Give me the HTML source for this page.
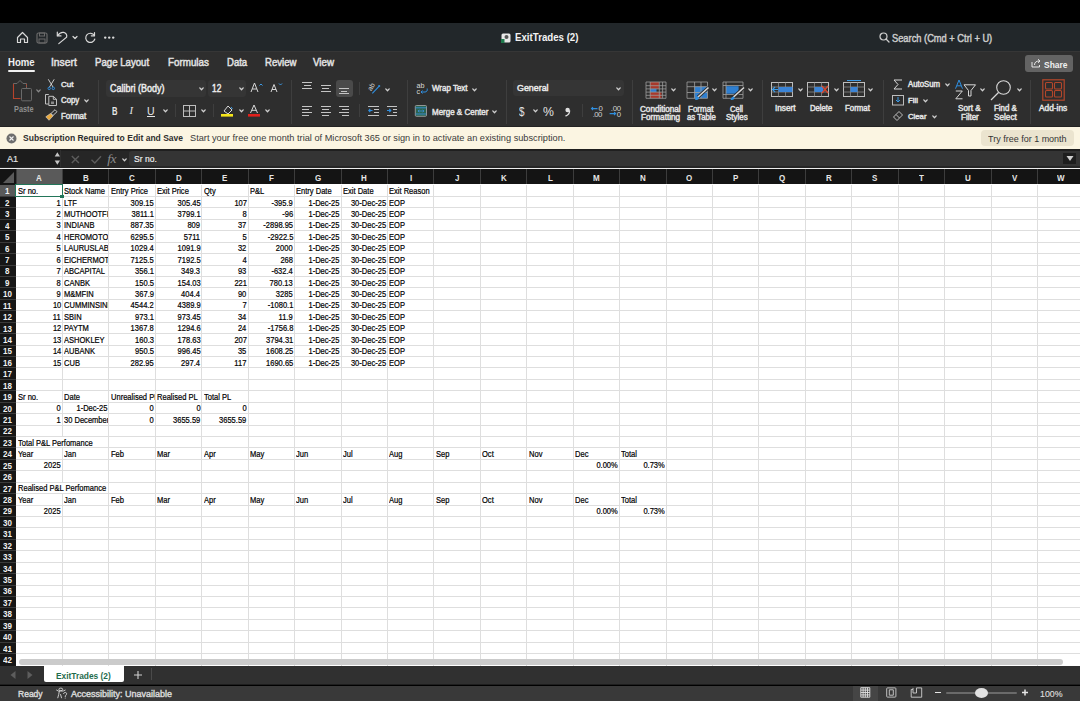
<!DOCTYPE html><html><head><meta charset="utf-8"><style>
html,body{margin:0;padding:0}
body{width:1080px;height:701px;overflow:hidden;position:relative;background:#000;font-family:"Liberation Sans",sans-serif}
.t{position:absolute;white-space:nowrap;line-height:20px;transform-origin:0 0}
.r{position:absolute}
.c{position:absolute;overflow:hidden;height:20px;white-space:nowrap}
.c span{position:absolute;line-height:20px;transform-origin:0 0;-webkit-text-stroke:0.2px #000}
.c span.rt{right:0;transform-origin:100% 0}
</style></head><body>
<div class="r" style="left:0.00px;top:0.00px;width:1080.00px;height:23.00px;background:#000;"></div>
<div class="r" style="left:0.00px;top:23.00px;width:1080.00px;height:28.00px;background:#22272a;"></div>
<div class="r" style="left:0.00px;top:51.00px;width:1080.00px;height:75.00px;background:#2e2e2e;"></div>
<div class="r" style="left:0.00px;top:51.00px;width:1080.00px;height:1.00px;background:#363636;"></div>
<div class="r" style="left:0.00px;top:126.00px;width:1080.00px;height:1.00px;background:#232323;"></div>
<div class="r" style="left:0.00px;top:127.00px;width:1080.00px;height:22.00px;background:#fbf5e2;"></div>
<div class="r" style="left:0.00px;top:149.00px;width:1080.00px;height:19.00px;background:#262626;"></div>
<div class="r" style="left:0.00px;top:149.00px;width:1080.00px;height:1.50px;background:#1f1f1f;"></div>
<div class="r" style="left:0.00px;top:167.60px;width:1080.00px;height:1.60px;background:#ececec;"></div>
<div class="r" style="left:0.00px;top:169.20px;width:1080.00px;height:14.80px;background:#141414;"></div>
<div class="r" style="left:0.00px;top:666.00px;width:1080.00px;height:18.30px;background:#303030;"></div>
<div class="r" style="left:0.00px;top:684.30px;width:1080.00px;height:1.20px;background:#1e1e1e;"></div>
<div class="r" style="left:0.00px;top:685.50px;width:1080.00px;height:15.50px;background:#393939;"></div>
<svg class="r" style="left:16px;top:31px" width="13" height="13" viewBox="0 0 13 13" fill="none"><path d="M1.5 6.5 L6.5 1.5 L11.5 6.5 V11.5 H8.5 V8 H4.5 V11.5 H1.5 Z" stroke="#d9d9d9" stroke-width="1.2" stroke-linecap="round" stroke-linejoin="round"/></svg>
<svg class="r" style="left:36px;top:32px" width="12" height="12" viewBox="0 0 12 12" fill="none"><rect x="1" y="1" width="10" height="10" rx="1.5" stroke="#6a6a6a" stroke-width="1.2"/><rect x="3.5" y="1" width="5" height="3" stroke="#6a6a6a" stroke-width="1"/><rect x="3" y="7" width="6" height="4" stroke="#6a6a6a" stroke-width="1"/></svg>
<svg class="r" style="left:55px;top:30px" width="14" height="16" viewBox="55 30 14 16" fill="none"><path d="M57.6 35.6 C59.5 32.8 61.5 32.1 63.6 32.4 C66 32.8 67.3 35 66.6 37.2 L58.8 43.6" stroke="#d9d9d9" stroke-width="1.2" stroke-linecap="round"/><path d="M57.3 32.2 V35.9 H61" stroke="#d9d9d9" stroke-width="1.2" stroke-linecap="round" stroke-linejoin="round"/></svg>
<svg class="r" style="left:72px;top:35px" width="6" height="5" viewBox="0 0 6 5" fill="none"><path d="M1 1.5 L3 3.5 L5 1.5" stroke="#d9d9d9" stroke-width="1.2" stroke-linecap="round" stroke-linejoin="round"/></svg>
<svg class="r" style="left:84px;top:31px" width="12" height="13" viewBox="0 0 12 13" fill="none"><path d="M10.3 4.5 A4.6 4.6 0 1 0 10.8 8" stroke="#d9d9d9" stroke-width="1.2" stroke-linecap="round" stroke-linejoin="round"/><path d="M10.5 1.5 V4.8 H7.3" stroke="#d9d9d9" stroke-width="1.2" stroke-linecap="round" stroke-linejoin="round"/></svg>
<svg class="r" style="left:103px;top:35px" width="13" height="5" viewBox="103 35 13 5" fill="none"><circle cx="105.2" cy="37.6" r="1.2" fill="#dcdcdc"/><circle cx="109.2" cy="37.6" r="1.2" fill="#dcdcdc"/><circle cx="113.2" cy="37.6" r="1.2" fill="#dcdcdc"/></svg>
<svg class="r" style="left:501px;top:33px" width="10" height="10" viewBox="0 0 10 10" fill="none"><rect x="0.5" y="0.5" width="9" height="9" rx="1.5" fill="#e8e8e8"/><circle cx="5.5" cy="4" r="2" fill="#555"/><rect x="0" y="6" width="3.5" height="4" fill="#1f7a4d"/></svg>
<div class="t" style="left:514.70px;top:27.97px;font-size:10.17px;color:#f2f2f2;font-weight:bold;transform:scaleX(0.9531);">ExitTrades (2)</div>
<svg class="r" style="left:879px;top:32px" width="11" height="11" viewBox="0 0 11 11" fill="none"><circle cx="4.5" cy="4.5" r="3.5" stroke="#cfcfcf" stroke-width="1.2"/><path d="M7 7 L10 10" stroke="#cfcfcf" stroke-width="1.3" stroke-linecap="round"/></svg>
<div class="t" style="left:891.60px;top:29.17px;font-size:10.17px;color:#cbcbcb;transform:scaleX(0.9153);-webkit-text-stroke:0.45px #cbcbcb;">Search (Cmd + Ctrl + U)</div>
<div class="t" style="left:7.90px;top:52.97px;font-size:10.17px;color:#f0f0f0;font-weight:bold;transform:scaleX(0.9445);">Home</div>
<div class="t" style="left:51.30px;top:52.97px;font-size:10.17px;color:#e2e2e2;transform:scaleX(1.0139);-webkit-text-stroke:0.45px #e2e2e2;">Insert</div>
<div class="t" style="left:95.40px;top:52.97px;font-size:10.17px;color:#e2e2e2;transform:scaleX(0.9486);-webkit-text-stroke:0.45px #e2e2e2;">Page Layout</div>
<div class="t" style="left:167.80px;top:52.97px;font-size:10.17px;color:#e2e2e2;transform:scaleX(0.9669);-webkit-text-stroke:0.45px #e2e2e2;">Formulas</div>
<div class="t" style="left:227.30px;top:52.97px;font-size:10.17px;color:#e2e2e2;transform:scaleX(0.9399);-webkit-text-stroke:0.45px #e2e2e2;">Data</div>
<div class="t" style="left:264.50px;top:52.97px;font-size:10.17px;color:#e2e2e2;transform:scaleX(0.9442);-webkit-text-stroke:0.45px #e2e2e2;">Review</div>
<div class="t" style="left:313.30px;top:52.97px;font-size:10.17px;color:#e2e2e2;transform:scaleX(0.9648);-webkit-text-stroke:0.45px #e2e2e2;">View</div>
<div class="r" style="left:8.00px;top:70.00px;width:27.00px;height:2.00px;background:#f0f0f0;border-radius:1px"></div>
<div class="r" style="left:1025.40px;top:55.00px;width:47.40px;height:17.00px;background:#636363;border-radius:3px"></div>
<svg class="r" style="left:1031px;top:58px" width="10" height="10" viewBox="0 0 10 10" fill="none"><path d="M1 4 V9 H8.5 V7" stroke="#e6e6e6" stroke-width="1"/><path d="M3.5 7 C3.5 4 5.5 3 8.5 3 M7 1.2 L9 3 L7 4.8" stroke="#e6e6e6" stroke-width="1" fill="none"/></svg>
<div class="t" style="left:1043.50px;top:54.68px;font-size:9.88px;color:#f0f0f0;font-weight:bold;transform:scaleX(0.8555);">Share</div>
<svg class="r" style="left:10px;top:78px" width="24" height="25" viewBox="10 78 24 25" fill="none"><path d="M13.5 84 V98.5 H20.5" stroke="#b5432c" stroke-width="1.1"/><path d="M13.5 84 V83.5 H17 L20 80.5 L23 83.5 H26.5 V88" stroke="#6a6a6a" stroke-width="1"/><path d="M26.5 84 V87" stroke="#b5432c" stroke-width="1" stroke-dasharray="1 1"/><rect x="21.5" y="88.5" width="10" height="12.3" rx="1" stroke="#6a6a6a" stroke-width="1"/></svg>
<svg class="r" style="left:35.50px;top:89.20px" width="5" height="4" viewBox="0 0 5 4" fill="none"><path d="M0.8 0.9 L2.5 2.7 L4.2 0.9" stroke="#8a8a8a" stroke-width="1.3" stroke-linecap="round" stroke-linejoin="round"/></svg>
<div class="t" style="left:14.40px;top:99.48px;font-size:8.72px;color:#8e8e8e;font-weight:bold;transform:scaleX(0.8422);">Paste</div>
<svg class="r" style="left:46px;top:78px" width="11" height="13" viewBox="46 78 11 13" fill="none"><path d="M48.3 79.3 L53 87 M54.2 79.3 L49.5 87" stroke="#d8d8d8" stroke-width="0.9"/><circle cx="49.2" cy="88.4" r="1.2" stroke="#2f8fe0" stroke-width="1"/><circle cx="53.3" cy="88.4" r="1.2" stroke="#2f8fe0" stroke-width="1"/></svg>
<div class="t" style="left:60.60px;top:75.18px;font-size:7.85px;color:#e4e4e4;transform:scaleX(1.0234);-webkit-text-stroke:0.45px #e4e4e4;">Cut</div>
<svg class="r" style="left:44px;top:93px" width="14" height="14" viewBox="44 93 14 14" fill="none"><path d="M48.8 94.5 H45.5 V104 H48.5" stroke="#d0d0d0" stroke-width="0.9"/><path d="M48.8 96.3 H53.3 L56.5 99.3 V105.5 H48.8 Z M53.3 96.3 V99.3 H56.5" stroke="#d0d0d0" stroke-width="0.9"/><rect x="51" y="101.5" width="3" height="2.5" fill="#8a8a8a"/></svg>
<div class="t" style="left:60.60px;top:90.88px;font-size:8.14px;color:#e4e4e4;transform:scaleX(0.9631);-webkit-text-stroke:0.45px #e4e4e4;">Copy</div>
<svg class="r" style="left:83.50px;top:99.20px" width="5" height="4" viewBox="0 0 5 4" fill="none"><path d="M0.8 0.9 L2.5 2.7 L4.2 0.9" stroke="#d0d0d0" stroke-width="1.3" stroke-linecap="round" stroke-linejoin="round"/></svg>
<svg class="r" style="left:44px;top:108px" width="14" height="14" viewBox="44 108 14 14" fill="none"><path d="M51 113.5 L55 109.7 L57 111.7 L53 115.5 Z" stroke="#d8d8d8" stroke-width="0.9"/><path d="M50.5 113.5 L53 116 L49 120.3 L45.8 116.8 Z" fill="#e9a93d" stroke="#d8d8d8" stroke-width="0.6"/></svg>
<div class="t" style="left:60.60px;top:106.78px;font-size:8.14px;color:#e4e4e4;transform:scaleX(0.9814);-webkit-text-stroke:0.45px #e4e4e4;">Format</div>
<div class="r" style="left:98.00px;top:80.00px;width:1.00px;height:44.00px;background:#3e3e3e;"></div>
<div class="r" style="left:106.00px;top:79.60px;width:100.00px;height:17.30px;background:#353535;border-radius:3px"></div>
<div class="t" style="left:110.20px;top:79.12px;font-size:10.03px;color:#ececec;transform:scaleX(0.8988);-webkit-text-stroke:0.45px #ececec;">Calibri (Body)</div>
<svg class="r" style="left:198.50px;top:87.20px" width="5" height="4" viewBox="0 0 5 4" fill="none"><path d="M0.8 0.9 L2.5 2.7 L4.2 0.9" stroke="#d0d0d0" stroke-width="1.3" stroke-linecap="round" stroke-linejoin="round"/></svg>
<div class="r" style="left:208.30px;top:79.60px;width:38.00px;height:17.30px;background:#353535;border-radius:3px"></div>
<div class="t" style="left:212.00px;top:79.12px;font-size:10.03px;color:#ececec;transform:scaleX(0.8336);-webkit-text-stroke:0.45px #ececec;">12</div>
<svg class="r" style="left:238.50px;top:87.20px" width="5" height="4" viewBox="0 0 5 4" fill="none"><path d="M0.8 0.9 L2.5 2.7 L4.2 0.9" stroke="#d0d0d0" stroke-width="1.3" stroke-linecap="round" stroke-linejoin="round"/></svg>
<svg class="r" style="left:250px;top:82px" width="14" height="11" viewBox="0 0 14 11" fill="none"><path d="M1 10 L4.5 1 L8 10 M2.3 7 H6.7" stroke="#d8d8d8" stroke-width="1"/><path d="M9.5 3.5 L11 2 L12.5 3.5" stroke="#3b9ae6" stroke-width="1"/></svg>
<svg class="r" style="left:270px;top:82px" width="13" height="11" viewBox="0 0 13 11" fill="none"><path d="M1 10 L4 2.5 L7 10 M2 7.5 H6" stroke="#d8d8d8" stroke-width="1"/><path d="M9 1.5 L10.5 3 L12 1.5" stroke="#3b9ae6" stroke-width="1"/></svg>
<div class="t" style="left:111.50px;top:101.37px;font-size:10.76px;color:#e4e4e4;font-weight:bold;transform:scaleX(0.7081);">B</div>
<div class="t" style="left:129.5px;top:100.5px;font-size:10.5px;color:#e4e4e4;font-style:italic;font-family:'Liberation Serif'">I</div>
<div class="t" style="left:147.00px;top:101.37px;font-size:10.76px;color:#e4e4e4;transform:scaleX(0.9784);">U</div>
<div class="r" style="left:147.00px;top:115.50px;width:7.60px;height:1.00px;background:#e4e4e4;"></div>
<svg class="r" style="left:162.50px;top:109.20px" width="5" height="4" viewBox="0 0 5 4" fill="none"><path d="M0.8 0.9 L2.5 2.7 L4.2 0.9" stroke="#d0d0d0" stroke-width="1.3" stroke-linecap="round" stroke-linejoin="round"/></svg>
<div class="r" style="left:175.00px;top:104.00px;width:1.00px;height:13.00px;background:#3e3e3e;"></div>
<svg class="r" style="left:183px;top:105px" width="13" height="12" viewBox="0 0 13 12" fill="none"><rect x="0.5" y="0.5" width="12" height="11" stroke="#bdbdbd" stroke-width="1"/><path d="M6.5 0.5 V11.5 M0.5 6 H12.5" stroke="#bdbdbd" stroke-width="1"/></svg>
<svg class="r" style="left:200.50px;top:109.20px" width="5" height="4" viewBox="0 0 5 4" fill="none"><path d="M0.8 0.9 L2.5 2.7 L4.2 0.9" stroke="#d0d0d0" stroke-width="1.3" stroke-linecap="round" stroke-linejoin="round"/></svg>
<div class="r" style="left:213.00px;top:104.00px;width:1.00px;height:13.00px;background:#3e3e3e;"></div>
<svg class="r" style="left:221px;top:104px" width="13" height="13" viewBox="0 0 13 13" fill="none"><path d="M3 7 L7 2 L11 6 L7 10 Z" stroke="#d8d8d8" stroke-width="1"/><path d="M10 3 L11.5 5" stroke="#3b9ae6" stroke-width="1"/><rect x="0" y="10" width="12" height="2.6" fill="#f5e51a"/></svg>
<svg class="r" style="left:238.50px;top:109.20px" width="5" height="4" viewBox="0 0 5 4" fill="none"><path d="M0.8 0.9 L2.5 2.7 L4.2 0.9" stroke="#d0d0d0" stroke-width="1.3" stroke-linecap="round" stroke-linejoin="round"/></svg>
<svg class="r" style="left:248px;top:104px" width="13" height="13" viewBox="0 0 13 13" fill="none"><path d="M2.5 9 L6 1 L9.5 9 M3.8 6.3 H8.2" stroke="#d8d8d8" stroke-width="1"/><rect x="0" y="10" width="12" height="2.6" fill="#e0201b"/></svg>
<svg class="r" style="left:265.00px;top:109.20px" width="5" height="4" viewBox="0 0 5 4" fill="none"><path d="M0.8 0.9 L2.5 2.7 L4.2 0.9" stroke="#d0d0d0" stroke-width="1.3" stroke-linecap="round" stroke-linejoin="round"/></svg>
<div class="r" style="left:290.50px;top:80.00px;width:1.00px;height:44.00px;background:#3e3e3e;"></div>
<div class="r" style="left:302.00px;top:82.00px;width:10.00px;height:1.00px;background:#c4c4c4;"></div>
<div class="r" style="left:304.00px;top:85.00px;width:7.00px;height:1.00px;background:#c4c4c4;"></div>
<div class="r" style="left:302.00px;top:88.00px;width:10.00px;height:1.00px;background:#c4c4c4;"></div>
<div class="r" style="left:321.00px;top:85.00px;width:10.00px;height:1.00px;background:#c4c4c4;"></div>
<div class="r" style="left:322.00px;top:88.00px;width:7.00px;height:1.00px;background:#c4c4c4;"></div>
<div class="r" style="left:321.00px;top:91.00px;width:10.00px;height:1.00px;background:#c4c4c4;"></div>
<div class="r" style="left:335.80px;top:79.80px;width:16.90px;height:17.10px;background:#4a4a4a;border-radius:3px"></div>
<div class="r" style="left:339.00px;top:88.00px;width:10.00px;height:1.00px;background:#c4c4c4;"></div>
<div class="r" style="left:341.00px;top:91.00px;width:6.00px;height:1.00px;background:#c4c4c4;"></div>
<div class="r" style="left:339.00px;top:93.00px;width:10.00px;height:1.00px;background:#c4c4c4;"></div>
<div class="r" style="left:358.50px;top:82.00px;width:1.00px;height:13.00px;background:#3e3e3e;"></div>
<svg class="r" style="left:364px;top:80px" width="18" height="15" viewBox="364 80 18 15" fill="none"><text x="371.3" y="91.3" font-size="7" fill="#d8d8d8" font-family="Liberation Sans" transform="rotate(-60 371.3 91.3)">ab</text><path d="M372.3 93.3 L379 86.3" stroke="#2f8fe0" stroke-width="1.1"/><circle cx="379.2" cy="86" r="1.1" fill="#2f8fe0"/></svg>
<svg class="r" style="left:384.50px;top:88.20px" width="5" height="4" viewBox="0 0 5 4" fill="none"><path d="M0.8 0.9 L2.5 2.7 L4.2 0.9" stroke="#d0d0d0" stroke-width="1.3" stroke-linecap="round" stroke-linejoin="round"/></svg>
<div class="r" style="left:302.00px;top:106.00px;width:10.00px;height:1.00px;background:#c4c4c4;"></div>
<div class="r" style="left:302.00px;top:109.00px;width:7.00px;height:1.00px;background:#c4c4c4;"></div>
<div class="r" style="left:302.00px;top:112.00px;width:10.00px;height:1.00px;background:#c4c4c4;"></div>
<div class="r" style="left:302.00px;top:115.00px;width:7.00px;height:1.00px;background:#c4c4c4;"></div>
<div class="r" style="left:321.00px;top:106.00px;width:10.00px;height:1.00px;background:#c4c4c4;"></div>
<div class="r" style="left:322.00px;top:109.00px;width:7.00px;height:1.00px;background:#c4c4c4;"></div>
<div class="r" style="left:321.00px;top:112.00px;width:10.00px;height:1.00px;background:#c4c4c4;"></div>
<div class="r" style="left:322.00px;top:115.00px;width:7.00px;height:1.00px;background:#c4c4c4;"></div>
<div class="r" style="left:339.00px;top:106.00px;width:10.00px;height:1.00px;background:#c4c4c4;"></div>
<div class="r" style="left:342.00px;top:109.00px;width:7.00px;height:1.00px;background:#c4c4c4;"></div>
<div class="r" style="left:339.00px;top:112.00px;width:10.00px;height:1.00px;background:#c4c4c4;"></div>
<div class="r" style="left:342.00px;top:115.00px;width:7.00px;height:1.00px;background:#c4c4c4;"></div>
<div class="r" style="left:358.50px;top:104.00px;width:1.00px;height:13.00px;background:#3e3e3e;"></div>
<div class="r" style="left:368.00px;top:106.00px;width:11.00px;height:1.00px;background:#c4c4c4;"></div>
<div class="r" style="left:374.00px;top:109.00px;width:5.00px;height:1.00px;background:#c4c4c4;"></div>
<div class="r" style="left:374.00px;top:112.00px;width:5.00px;height:1.00px;background:#c4c4c4;"></div>
<div class="r" style="left:368.00px;top:115.00px;width:11.00px;height:1.00px;background:#c4c4c4;"></div>
<svg class="r" style="left:367px;top:107px" width="7" height="7" viewBox="367 107 7 7" fill="none"><path d="M372.5 110.5 H368.8 M370.3 109 L368.8 110.5 L370.3 112" stroke="#2f8fe0" stroke-width="1.1"/></svg>
<div class="r" style="left:387.00px;top:106.00px;width:10.00px;height:1.00px;background:#c4c4c4;"></div>
<div class="r" style="left:393.00px;top:109.00px;width:4.00px;height:1.00px;background:#c4c4c4;"></div>
<div class="r" style="left:393.00px;top:112.00px;width:4.00px;height:1.00px;background:#c4c4c4;"></div>
<div class="r" style="left:387.00px;top:115.00px;width:10.00px;height:1.00px;background:#c4c4c4;"></div>
<svg class="r" style="left:386px;top:107px" width="7" height="7" viewBox="386 107 7 7" fill="none"><path d="M387 110.5 H390.8 M389.3 109 L390.8 110.5 L389.3 112" stroke="#2f8fe0" stroke-width="1.1"/></svg>
<div class="r" style="left:406.50px;top:80.00px;width:1.00px;height:44.00px;background:#3e3e3e;"></div>
<svg class="r" style="left:415px;top:82px" width="14" height="13" viewBox="415 82 14 13" fill="none"><text x="416.5" y="88.2" font-size="7.2" fill="#d8d8d8" font-family="Liberation Sans">ab</text><text x="416.5" y="93.6" font-size="7.2" fill="#d8d8d8" font-family="Liberation Sans">c</text><path d="M421 92 H425 C427 92 427.5 90.5 427.2 88.5 M422.5 90.5 L421 92 L422.5 93.5" stroke="#2f8fe0" stroke-width="1"/></svg>
<div class="t" style="left:431.60px;top:79.43px;font-size:8.28px;color:#e4e4e4;transform:scaleX(0.9624);-webkit-text-stroke:0.45px #e4e4e4;">Wrap Text</div>
<svg class="r" style="left:472.00px;top:87.70px" width="5" height="4" viewBox="0 0 5 4" fill="none"><path d="M0.8 0.9 L2.5 2.7 L4.2 0.9" stroke="#d0d0d0" stroke-width="1.3" stroke-linecap="round" stroke-linejoin="round"/></svg>
<svg class="r" style="left:414px;top:104px" width="14" height="14" viewBox="414 104 14 14" fill="none"><rect x="415.3" y="105.5" width="11.2" height="10.8" rx="1" fill="#2a6452" stroke="#a0a0a0" stroke-width="0.9"/><path d="M415.5 107.8 H426.3 M415.5 114 H426.3" stroke="#3a8fd8" stroke-width="0.9"/><path d="M418 111 H424 M419.3 109.8 L418 111 L419.3 112.2 M422.7 109.8 L424 111 L422.7 112.2" stroke="#3a8fd8" stroke-width="0.8"/></svg>
<div class="t" style="left:431.60px;top:102.33px;font-size:8.58px;color:#e4e4e4;transform:scaleX(0.9317);-webkit-text-stroke:0.45px #e4e4e4;">Merge &amp; Center</div>
<svg class="r" style="left:492.00px;top:110.20px" width="5" height="4" viewBox="0 0 5 4" fill="none"><path d="M0.8 0.9 L2.5 2.7 L4.2 0.9" stroke="#d0d0d0" stroke-width="1.3" stroke-linecap="round" stroke-linejoin="round"/></svg>
<div class="r" style="left:506.00px;top:80.00px;width:1.00px;height:44.00px;background:#3e3e3e;"></div>
<div class="r" style="left:513.20px;top:79.60px;width:110.80px;height:16.90px;background:#353535;border-radius:3px"></div>
<div class="t" style="left:517.30px;top:78.33px;font-size:9.45px;color:#ececec;transform:scaleX(0.9401);-webkit-text-stroke:0.45px #ececec;">General</div>
<svg class="r" style="left:615.50px;top:86.70px" width="5" height="4" viewBox="0 0 5 4" fill="none"><path d="M0.8 0.9 L2.5 2.7 L4.2 0.9" stroke="#d0d0d0" stroke-width="1.3" stroke-linecap="round" stroke-linejoin="round"/></svg>
<div class="t" style="left:518.70px;top:102.17px;font-size:13.08px;color:#e4e4e4;transform:scaleX(0.7560);">$</div>
<svg class="r" style="left:533.00px;top:109.20px" width="5" height="4" viewBox="0 0 5 4" fill="none"><path d="M0.8 0.9 L2.5 2.7 L4.2 0.9" stroke="#d0d0d0" stroke-width="1.3" stroke-linecap="round" stroke-linejoin="round"/></svg>
<div class="t" style="left:543.30px;top:102.02px;font-size:12.94px;color:#e4e4e4;transform:scaleX(0.9477);">%</div>
<svg class="r" style="left:563px;top:106px" width="9" height="11" viewBox="563 106 9 11" fill="none"><circle cx="567.6" cy="110" r="2.2" fill="#e0e0e0"/><path d="M569.5 110.3 C569.8 113 568.3 115 565.5 116" stroke="#e0e0e0" stroke-width="1.4" fill="none"/></svg>
<div class="r" style="left:582.30px;top:104.00px;width:1.00px;height:13.00px;background:#3e3e3e;"></div>
<svg class="r" style="left:589px;top:103px" width="35" height="15" viewBox="589 103 35 15" fill="none"><path d="M597.5 108.6 H591.5 M593 107.1 L591.5 108.6 L593 110.1" stroke="#2f8fe0" stroke-width="1.1"/><text x="598.6" y="111.1" font-size="7.8" fill="#d0d0d0" font-family="Liberation Sans">0</text><text x="592.8" y="116.5" font-size="7.8" fill="#d0d0d0" font-family="Liberation Sans" textLength="9.5">.00</text><text x="610.8" y="111.1" font-size="7.8" fill="#d0d0d0" font-family="Liberation Sans" textLength="10.3">.00</text><path d="M609.6 113.6 H615.6 M614.1 112.1 L615.6 113.6 L614.1 115.1" stroke="#2f8fe0" stroke-width="1.1"/><text x="616.8" y="116.5" font-size="7.8" fill="#d0d0d0" font-family="Liberation Sans">0</text></svg>
<div class="r" style="left:632.00px;top:80.00px;width:1.00px;height:44.00px;background:#3e3e3e;"></div>
<svg class="r" style="left:645px;top:81px" width="22" height="18" viewBox="645 81 22 18" fill="none"><rect x="650" y="82" width="9" height="6.8" fill="#a8392b"/><rect x="650" y="88.8" width="6.5" height="3.4" fill="#2f7fd0"/><rect x="650" y="92.2" width="11.5" height="6" fill="#a8392b"/><path d="M646 82 H666 V98.3 H646 Z M646 85.7 H666 M646 88.9 H666 M646 92.1 H666 M646 95.3 H666 M650.2 82 V98.3 M659.3 82 V98.3 M662.6 82 V98.3" stroke="#9c9c9c" stroke-width="0.8"/></svg>
<svg class="r" style="left:671.00px;top:88.20px" width="5" height="4" viewBox="0 0 5 4" fill="none"><path d="M0.8 0.9 L2.5 2.7 L4.2 0.9" stroke="#d0d0d0" stroke-width="1.3" stroke-linecap="round" stroke-linejoin="round"/></svg>
<div class="t" style="left:640.30px;top:98.88px;font-size:8.43px;color:#e4e4e4;transform:scaleX(0.9649);-webkit-text-stroke:0.45px #e4e4e4;">Conditional</div>
<div class="t" style="left:640.80px;top:107.08px;font-size:8.43px;color:#e4e4e4;transform:scaleX(0.9729);-webkit-text-stroke:0.45px #e4e4e4;">Formatting</div>
<svg class="r" style="left:686px;top:80px" width="25" height="21" viewBox="686 80 25 21" fill="none"><rect x="694.6" y="86.7" width="12.9" height="11.6" fill="#2f7fd0"/><path d="M687 82 H707.5 V98.3 H687 Z M687 86.7 H707.5 M687 92.5 H707.5 M694.6 82 V98.3 M701 82 V98.3" stroke="#a0a0a0" stroke-width="0.8"/><path d="M708.5 87.5 L698 97" stroke="#2e2e2e" stroke-width="3.2"/><path d="M708.5 87.5 L698 97" stroke="#d8d8d8" stroke-width="1.6"/><path d="M697.5 96.5 C695.5 97.5 694.5 99.5 695.5 100 C697.5 100.5 699.5 99 699 97.5 Z" fill="#2f8fe0"/></svg>
<svg class="r" style="left:712.00px;top:88.20px" width="5" height="4" viewBox="0 0 5 4" fill="none"><path d="M0.8 0.9 L2.5 2.7 L4.2 0.9" stroke="#d0d0d0" stroke-width="1.3" stroke-linecap="round" stroke-linejoin="round"/></svg>
<div class="t" style="left:688.40px;top:98.88px;font-size:8.43px;color:#e4e4e4;transform:scaleX(0.9513);-webkit-text-stroke:0.45px #e4e4e4;">Format</div>
<div class="t" style="left:686.60px;top:107.08px;font-size:8.43px;color:#e4e4e4;transform:scaleX(0.9249);-webkit-text-stroke:0.45px #e4e4e4;">as Table</div>
<svg class="r" style="left:722px;top:80px" width="25" height="21" viewBox="722 80 25 21" fill="none"><rect x="726" y="86.2" width="12.6" height="7.5" fill="#2f7fd0"/><path d="M723 82 H743 V98.3 H723 Z M723 85.5 H743 M723 94.5 H743 M726 82 V98.3" stroke="#a0a0a0" stroke-width="0.8"/><path d="M744 87.5 L733.5 97" stroke="#2e2e2e" stroke-width="3.2"/><path d="M744 87.5 L733.5 97" stroke="#d8d8d8" stroke-width="1.6"/><path d="M733 96.5 C731 97.5 730 99.5 731 100 C733 100.5 735 99 734.5 97.5 Z" fill="#2f8fe0"/></svg>
<svg class="r" style="left:748.00px;top:88.20px" width="5" height="4" viewBox="0 0 5 4" fill="none"><path d="M0.8 0.9 L2.5 2.7 L4.2 0.9" stroke="#d0d0d0" stroke-width="1.3" stroke-linecap="round" stroke-linejoin="round"/></svg>
<div class="t" style="left:730.00px;top:98.88px;font-size:8.43px;color:#e4e4e4;transform:scaleX(0.8951);-webkit-text-stroke:0.45px #e4e4e4;">Cell</div>
<div class="t" style="left:725.80px;top:107.08px;font-size:8.43px;color:#e4e4e4;transform:scaleX(0.9452);-webkit-text-stroke:0.45px #e4e4e4;">Styles</div>
<div class="r" style="left:762.00px;top:80.00px;width:1.00px;height:44.00px;background:#3e3e3e;"></div>
<svg class="r" style="left:771.3px;top:79.5px" width="23" height="19" viewBox="0 0 23 19" fill="none"><rect x="0.5" y="2.5" width="21" height="14" stroke="#bdbdbd" stroke-width="1"/><path d="M0.5 7 H21.5 M0.5 12 H21.5 M7.5 2.5 V16.5 M14.5 2.5 V16.5" stroke="#8a8a8a" stroke-width="0.8"/><rect x="7.5" y="7" width="14" height="5" fill="#3b84d6"/><path d="M7 9.5 H1.5 M4 7 L1.5 9.5 L4 12" stroke="#3b9ae6" stroke-width="1.2"/></svg>
<svg class="r" style="left:798.00px;top:88.20px" width="5" height="4" viewBox="0 0 5 4" fill="none"><path d="M0.8 0.9 L2.5 2.7 L4.2 0.9" stroke="#d0d0d0" stroke-width="1.3" stroke-linecap="round" stroke-linejoin="round"/></svg>
<div class="t" style="left:775.40px;top:99.28px;font-size:8.14px;color:#e4e4e4;transform:scaleX(1.0119);-webkit-text-stroke:0.45px #e4e4e4;">Insert</div>
<svg class="r" style="left:807.4px;top:79.5px" width="23" height="19" viewBox="0 0 23 19" fill="none"><rect x="0.5" y="2.5" width="21" height="14" stroke="#bdbdbd" stroke-width="1"/><path d="M0.5 7 H21.5 M0.5 12 H21.5 M7.5 2.5 V16.5 M14.5 2.5 V16.5" stroke="#8a8a8a" stroke-width="0.8"/><rect x="7.5" y="7" width="9" height="5" fill="#3b84d6"/><path d="M15 6 L21 13 M21 6 L15 13" stroke="#d9472f" stroke-width="1.3"/></svg>
<svg class="r" style="left:833.50px;top:88.20px" width="5" height="4" viewBox="0 0 5 4" fill="none"><path d="M0.8 0.9 L2.5 2.7 L4.2 0.9" stroke="#d0d0d0" stroke-width="1.3" stroke-linecap="round" stroke-linejoin="round"/></svg>
<div class="t" style="left:810.40px;top:99.28px;font-size:8.14px;color:#e4e4e4;transform:scaleX(0.9435);-webkit-text-stroke:0.45px #e4e4e4;">Delete</div>
<svg class="r" style="left:843px;top:79.5px" width="23" height="19" viewBox="0 0 23 19" fill="none"><rect x="0.5" y="2.5" width="21" height="14" stroke="#bdbdbd" stroke-width="1"/><path d="M0.5 7 H21.5 M0.5 12 H21.5 M7.5 2.5 V16.5 M14.5 2.5 V16.5" stroke="#8a8a8a" stroke-width="0.8"/><rect x="7.5" y="7" width="7" height="5" fill="#3b84d6"/><path d="M4 0.5 H18" stroke="#3b9ae6" stroke-width="1"/></svg>
<svg class="r" style="left:868.00px;top:88.20px" width="5" height="4" viewBox="0 0 5 4" fill="none"><path d="M0.8 0.9 L2.5 2.7 L4.2 0.9" stroke="#d0d0d0" stroke-width="1.3" stroke-linecap="round" stroke-linejoin="round"/></svg>
<div class="t" style="left:845.30px;top:99.28px;font-size:8.14px;color:#e4e4e4;transform:scaleX(0.9659);-webkit-text-stroke:0.45px #e4e4e4;">Format</div>
<div class="r" style="left:883.00px;top:80.00px;width:1.00px;height:44.00px;background:#3e3e3e;"></div>
<svg class="r" style="left:893px;top:79px" width="10" height="11" viewBox="0 0 10 11" fill="none"><path d="M9 1 H1 L5 5.5 L1 10 H9" stroke="#d8d8d8" stroke-width="1"/></svg>
<div class="t" style="left:908.00px;top:74.98px;font-size:8.14px;color:#e4e4e4;transform:scaleX(0.9587);-webkit-text-stroke:0.45px #e4e4e4;">AutoSum</div>
<svg class="r" style="left:945.00px;top:83.20px" width="5" height="4" viewBox="0 0 5 4" fill="none"><path d="M0.8 0.9 L2.5 2.7 L4.2 0.9" stroke="#d0d0d0" stroke-width="1.3" stroke-linecap="round" stroke-linejoin="round"/></svg>
<svg class="r" style="left:891.5px;top:95px" width="12" height="11" viewBox="0 0 12 11" fill="none"><rect x="0.5" y="0.5" width="11" height="9.5" stroke="#bdbdbd" stroke-width="1"/><path d="M6 2 V7 M4 5 L6 7 L8 5" stroke="#3b9ae6" stroke-width="1"/></svg>
<div class="t" style="left:908.00px;top:91.13px;font-size:7.70px;color:#e4e4e4;transform:scaleX(1.0162);-webkit-text-stroke:0.45px #e4e4e4;">Fill</div>
<svg class="r" style="left:922.50px;top:99.20px" width="5" height="4" viewBox="0 0 5 4" fill="none"><path d="M0.8 0.9 L2.5 2.7 L4.2 0.9" stroke="#d0d0d0" stroke-width="1.3" stroke-linecap="round" stroke-linejoin="round"/></svg>
<svg class="r" style="left:891.5px;top:110px" width="12" height="11" viewBox="0 0 12 11" fill="none"><path d="M1.5 7 L7 1.5 L10.5 5 L5 10.5 Z M4 4.5 L7.5 8" stroke="#bdbdbd" stroke-width="1"/></svg>
<div class="t" style="left:908.00px;top:106.53px;font-size:7.70px;color:#e4e4e4;transform:scaleX(1.0049);-webkit-text-stroke:0.45px #e4e4e4;">Clear</div>
<svg class="r" style="left:931.50px;top:114.70px" width="5" height="4" viewBox="0 0 5 4" fill="none"><path d="M0.8 0.9 L2.5 2.7 L4.2 0.9" stroke="#d0d0d0" stroke-width="1.3" stroke-linecap="round" stroke-linejoin="round"/></svg>
<svg class="r" style="left:954px;top:78px" width="24" height="23" viewBox="954 78 24 23" fill="none"><path d="M955.5 88.7 L959 80 L962.5 88.7 M956.8 85.8 H961.2" stroke="#2f8fe0" stroke-width="1"/><path d="M955.8 91 H962.3 L955.8 98.8 H962.5" stroke="#d8d8d8" stroke-width="1"/><path d="M964 84.8 H975.5 L971 90.5 V96 L968.5 96 V90.5 Z" stroke="#d8d8d8" stroke-width="1"/></svg>
<svg class="r" style="left:980.00px;top:88.20px" width="5" height="4" viewBox="0 0 5 4" fill="none"><path d="M0.8 0.9 L2.5 2.7 L4.2 0.9" stroke="#d0d0d0" stroke-width="1.3" stroke-linecap="round" stroke-linejoin="round"/></svg>
<div class="t" style="left:958.00px;top:99.28px;font-size:8.14px;color:#e4e4e4;transform:scaleX(1.0036);-webkit-text-stroke:0.45px #e4e4e4;">Sort &amp;</div>
<div class="t" style="left:960.90px;top:107.08px;font-size:8.43px;color:#e4e4e4;transform:scaleX(0.9501);-webkit-text-stroke:0.45px #e4e4e4;">Filter</div>
<svg class="r" style="left:990px;top:79px" width="22" height="22" viewBox="0 0 22 22" fill="none"><circle cx="13.5" cy="8.5" r="6.8" stroke="#d8d8d8" stroke-width="1.1"/><path d="M8.5 13.5 L1 21" stroke="#d8d8d8" stroke-width="1.2"/></svg>
<svg class="r" style="left:1016.50px;top:88.20px" width="5" height="4" viewBox="0 0 5 4" fill="none"><path d="M0.8 0.9 L2.5 2.7 L4.2 0.9" stroke="#d0d0d0" stroke-width="1.3" stroke-linecap="round" stroke-linejoin="round"/></svg>
<div class="t" style="left:993.50px;top:99.28px;font-size:8.14px;color:#e4e4e4;transform:scaleX(0.9692);-webkit-text-stroke:0.45px #e4e4e4;">Find &amp;</div>
<div class="t" style="left:993.50px;top:107.08px;font-size:8.43px;color:#e4e4e4;transform:scaleX(0.9731);-webkit-text-stroke:0.45px #e4e4e4;">Select</div>
<div class="r" style="left:1030.00px;top:80.00px;width:1.00px;height:44.00px;background:#3e3e3e;"></div>
<svg class="r" style="left:1041.5px;top:78.5px" width="23" height="22" viewBox="0 0 23 22" fill="none"><rect x="0.8" y="0.8" width="21.4" height="20.4" stroke="#b3472b" stroke-width="1.2"/><rect x="3.5" y="3.5" width="7" height="6.5" rx="1" stroke="#b3472b" stroke-width="1.1"/><rect x="12.5" y="3.5" width="7" height="6.5" rx="1" stroke="#b3472b" stroke-width="1.1"/><rect x="3.5" y="11.5" width="7" height="6.5" rx="1" stroke="#b3472b" stroke-width="1.1"/><rect x="12.5" y="11.5" width="7" height="6.5" rx="1" stroke="#b3472b" stroke-width="1.1"/></svg>
<div class="t" style="left:1039.00px;top:99.28px;font-size:8.14px;color:#e4e4e4;transform:scaleX(1.0254);-webkit-text-stroke:0.45px #e4e4e4;">Add-ins</div>
<svg class="r" style="left:6px;top:133px" width="11" height="11" viewBox="0 0 11 11" fill="none"><circle cx="5.5" cy="5.5" r="5" fill="#6e6e6e"/><path d="M3.5 3.5 L7.5 7.5 M7.5 3.5 L3.5 7.5" stroke="#f2f2f2" stroke-width="1.1"/></svg>
<div class="t" style="left:22.90px;top:128.33px;font-size:9.16px;color:#2f2f2f;font-weight:bold;transform:scaleX(0.9310);">Subscription Required to Edit and Save</div>
<div class="t" style="left:190.00px;top:128.33px;font-size:9.16px;color:#3a3a3a;transform:scaleX(1.0062);">Start your free one month trial of Microsoft 365 or sign in to activate an existing subscription.</div>
<div class="r" style="left:980.50px;top:129.70px;width:93.40px;height:16.70px;background:#ebe4cf;border-radius:4px"></div>
<div class="t" style="left:988.30px;top:129.23px;font-size:9.45px;color:#333;transform:scaleX(0.9527);">Try free for 1 month</div>
<div class="r" style="left:0.00px;top:149.50px;width:60.70px;height:17.50px;background:#1c1c1c;"></div>
<div class="r" style="left:60.20px;top:149.50px;width:1.00px;height:17.50px;background:#2f2f2f;"></div>
<div class="t" style="left:6.80px;top:148.73px;font-size:8.87px;color:#e6e6e6;transform:scaleX(1.0235);-webkit-text-stroke:0.15px #e6e6e6;">A1</div>
<svg class="r" style="left:53px;top:151px" width="9" height="15" viewBox="53 151 9 15" fill="none"><path d="M57.35 152.3 L60 156.4 H54.7 Z M57.35 164.7 L60 160.5 H54.7 Z" fill="#c4c4c4"/></svg>
<svg class="r" style="left:70px;top:154px" width="11" height="11" viewBox="70 154 11 11" fill="none"><path d="M71.8 156 L78.9 163 M78.9 156 L71.8 163" stroke="#5c5c5c" stroke-width="1.4"/></svg>
<svg class="r" style="left:90px;top:154px" width="13" height="11" viewBox="90 154 13 11" fill="none"><path d="M91.5 159.8 L94.8 163 L101 156.2" stroke="#5c5c5c" stroke-width="1.4"/></svg>
<div class="t" style="left:107.3px;top:149.2px;font-size:13.5px;color:#8c8c8c;font-style:italic;font-family:'Liberation Serif';letter-spacing:-0.6px">fx</div>
<svg class="r" style="left:122.30px;top:157.80px" width="5" height="4" viewBox="0 0 5 4" fill="none"><path d="M0.8 0.9 L2.5 2.7 L4.2 0.9" stroke="#d0d0d0" stroke-width="1.3" stroke-linecap="round" stroke-linejoin="round"/></svg>
<div class="r" style="left:128.80px;top:151.30px;width:951.20px;height:14.90px;background:#343434;border-radius:3px 0 0 3px"></div>
<div class="t" style="left:133.60px;top:149.08px;font-size:9.30px;color:#f2f2f2;transform:scaleX(0.9186);-webkit-text-stroke:0.15px #f2f2f2;">Sr no.</div>
<div class="r" style="left:1063.00px;top:153.00px;width:13.00px;height:11.00px;background:#1e1e1e;"></div>
<svg class="r" style="left:1066px;top:155px" width="8" height="7" viewBox="0 0 8 7" fill="none"><path d="M0.5 1 H7.5 L4 6 Z" fill="#cfcfcf"/></svg>
<div class="r" style="left:16.00px;top:184.00px;width:1064.00px;height:482.00px;background:#ffffff;"></div>
<div class="r" style="left:16.00px;top:196.00px;width:1064.00px;height:1.00px;background:#dedede;"></div>
<div class="r" style="left:16.00px;top:207.00px;width:1064.00px;height:1.00px;background:#dedede;"></div>
<div class="r" style="left:16.00px;top:219.00px;width:1064.00px;height:1.00px;background:#dedede;"></div>
<div class="r" style="left:16.00px;top:230.00px;width:1064.00px;height:1.00px;background:#dedede;"></div>
<div class="r" style="left:16.00px;top:242.00px;width:1064.00px;height:1.00px;background:#dedede;"></div>
<div class="r" style="left:16.00px;top:253.00px;width:1064.00px;height:1.00px;background:#dedede;"></div>
<div class="r" style="left:16.00px;top:265.00px;width:1064.00px;height:1.00px;background:#dedede;"></div>
<div class="r" style="left:16.00px;top:276.00px;width:1064.00px;height:1.00px;background:#dedede;"></div>
<div class="r" style="left:16.00px;top:287.00px;width:1064.00px;height:1.00px;background:#dedede;"></div>
<div class="r" style="left:16.00px;top:299.00px;width:1064.00px;height:1.00px;background:#dedede;"></div>
<div class="r" style="left:16.00px;top:310.00px;width:1064.00px;height:1.00px;background:#dedede;"></div>
<div class="r" style="left:16.00px;top:322.00px;width:1064.00px;height:1.00px;background:#dedede;"></div>
<div class="r" style="left:16.00px;top:333.00px;width:1064.00px;height:1.00px;background:#dedede;"></div>
<div class="r" style="left:16.00px;top:345.00px;width:1064.00px;height:1.00px;background:#dedede;"></div>
<div class="r" style="left:16.00px;top:356.00px;width:1064.00px;height:1.00px;background:#dedede;"></div>
<div class="r" style="left:16.00px;top:367.00px;width:1064.00px;height:1.00px;background:#dedede;"></div>
<div class="r" style="left:16.00px;top:379.00px;width:1064.00px;height:1.00px;background:#dedede;"></div>
<div class="r" style="left:16.00px;top:390.00px;width:1064.00px;height:1.00px;background:#dedede;"></div>
<div class="r" style="left:16.00px;top:402.00px;width:1064.00px;height:1.00px;background:#dedede;"></div>
<div class="r" style="left:16.00px;top:413.00px;width:1064.00px;height:1.00px;background:#dedede;"></div>
<div class="r" style="left:16.00px;top:425.00px;width:1064.00px;height:1.00px;background:#dedede;"></div>
<div class="r" style="left:16.00px;top:436.00px;width:1064.00px;height:1.00px;background:#dedede;"></div>
<div class="r" style="left:16.00px;top:447.00px;width:1064.00px;height:1.00px;background:#dedede;"></div>
<div class="r" style="left:16.00px;top:459.00px;width:1064.00px;height:1.00px;background:#dedede;"></div>
<div class="r" style="left:16.00px;top:470.00px;width:1064.00px;height:1.00px;background:#dedede;"></div>
<div class="r" style="left:16.00px;top:482.00px;width:1064.00px;height:1.00px;background:#dedede;"></div>
<div class="r" style="left:16.00px;top:493.00px;width:1064.00px;height:1.00px;background:#dedede;"></div>
<div class="r" style="left:16.00px;top:505.00px;width:1064.00px;height:1.00px;background:#dedede;"></div>
<div class="r" style="left:16.00px;top:516.00px;width:1064.00px;height:1.00px;background:#dedede;"></div>
<div class="r" style="left:16.00px;top:527.00px;width:1064.00px;height:1.00px;background:#dedede;"></div>
<div class="r" style="left:16.00px;top:539.00px;width:1064.00px;height:1.00px;background:#dedede;"></div>
<div class="r" style="left:16.00px;top:550.00px;width:1064.00px;height:1.00px;background:#dedede;"></div>
<div class="r" style="left:16.00px;top:562.00px;width:1064.00px;height:1.00px;background:#dedede;"></div>
<div class="r" style="left:16.00px;top:573.00px;width:1064.00px;height:1.00px;background:#dedede;"></div>
<div class="r" style="left:16.00px;top:585.00px;width:1064.00px;height:1.00px;background:#dedede;"></div>
<div class="r" style="left:16.00px;top:596.00px;width:1064.00px;height:1.00px;background:#dedede;"></div>
<div class="r" style="left:16.00px;top:607.00px;width:1064.00px;height:1.00px;background:#dedede;"></div>
<div class="r" style="left:16.00px;top:619.00px;width:1064.00px;height:1.00px;background:#dedede;"></div>
<div class="r" style="left:16.00px;top:630.00px;width:1064.00px;height:1.00px;background:#dedede;"></div>
<div class="r" style="left:16.00px;top:642.00px;width:1064.00px;height:1.00px;background:#dedede;"></div>
<div class="r" style="left:16.00px;top:653.00px;width:1064.00px;height:1.00px;background:#dedede;"></div>
<div class="r" style="left:62.00px;top:184.50px;width:1.00px;height:481.50px;background:#dedede;"></div>
<div class="r" style="left:108.00px;top:184.50px;width:1.00px;height:481.50px;background:#dedede;"></div>
<div class="r" style="left:155.00px;top:184.50px;width:1.00px;height:481.50px;background:#dedede;"></div>
<div class="r" style="left:201.00px;top:184.50px;width:1.00px;height:481.50px;background:#dedede;"></div>
<div class="r" style="left:248.00px;top:184.50px;width:1.00px;height:481.50px;background:#dedede;"></div>
<div class="r" style="left:294.00px;top:184.50px;width:1.00px;height:481.50px;background:#dedede;"></div>
<div class="r" style="left:341.00px;top:184.50px;width:1.00px;height:481.50px;background:#dedede;"></div>
<div class="r" style="left:387.00px;top:184.50px;width:1.00px;height:481.50px;background:#dedede;"></div>
<div class="r" style="left:433.00px;top:184.50px;width:1.00px;height:481.50px;background:#dedede;"></div>
<div class="r" style="left:480.00px;top:184.50px;width:1.00px;height:481.50px;background:#dedede;"></div>
<div class="r" style="left:526.00px;top:184.50px;width:1.00px;height:481.50px;background:#dedede;"></div>
<div class="r" style="left:573.00px;top:184.50px;width:1.00px;height:481.50px;background:#dedede;"></div>
<div class="r" style="left:619.00px;top:184.50px;width:1.00px;height:481.50px;background:#dedede;"></div>
<div class="r" style="left:666.00px;top:184.50px;width:1.00px;height:481.50px;background:#dedede;"></div>
<div class="r" style="left:712.00px;top:184.50px;width:1.00px;height:481.50px;background:#dedede;"></div>
<div class="r" style="left:758.00px;top:184.50px;width:1.00px;height:481.50px;background:#dedede;"></div>
<div class="r" style="left:805.00px;top:184.50px;width:1.00px;height:481.50px;background:#dedede;"></div>
<div class="r" style="left:851.00px;top:184.50px;width:1.00px;height:481.50px;background:#dedede;"></div>
<div class="r" style="left:898.00px;top:184.50px;width:1.00px;height:481.50px;background:#dedede;"></div>
<div class="r" style="left:944.00px;top:184.50px;width:1.00px;height:481.50px;background:#dedede;"></div>
<div class="r" style="left:991.00px;top:184.50px;width:1.00px;height:481.50px;background:#dedede;"></div>
<div class="r" style="left:1037.00px;top:184.50px;width:1.00px;height:481.50px;background:#dedede;"></div>
<div class="r" style="left:16.50px;top:169.20px;width:46.00px;height:14.80px;background:#5a5a5a;"></div>
<div class="r" style="left:62.00px;top:169.20px;width:1.00px;height:14.80px;background:#3c3c3c;"></div>
<div class="t" style="left:36.39px;top:168.83px;font-size:8.28px;color:#e6e6e6;font-weight:bold;transform:scaleX(0.9667);">A</div>
<div class="r" style="left:108.00px;top:169.20px;width:1.00px;height:14.80px;background:#3c3c3c;"></div>
<div class="t" style="left:82.82px;top:168.83px;font-size:8.28px;color:#e6e6e6;font-weight:bold;transform:scaleX(0.9667);">B</div>
<div class="r" style="left:155.00px;top:169.20px;width:1.00px;height:14.80px;background:#3c3c3c;"></div>
<div class="t" style="left:129.25px;top:168.83px;font-size:8.28px;color:#e6e6e6;font-weight:bold;transform:scaleX(0.9667);">C</div>
<div class="r" style="left:201.00px;top:169.20px;width:1.00px;height:14.80px;background:#3c3c3c;"></div>
<div class="t" style="left:175.68px;top:168.83px;font-size:8.28px;color:#e6e6e6;font-weight:bold;transform:scaleX(0.9667);">D</div>
<div class="r" style="left:248.00px;top:169.20px;width:1.00px;height:14.80px;background:#3c3c3c;"></div>
<div class="t" style="left:222.33px;top:168.83px;font-size:8.28px;color:#e6e6e6;font-weight:bold;transform:scaleX(0.9667);">E</div>
<div class="r" style="left:294.00px;top:169.20px;width:1.00px;height:14.80px;background:#3c3c3c;"></div>
<div class="t" style="left:268.99px;top:168.83px;font-size:8.28px;color:#e6e6e6;font-weight:bold;transform:scaleX(0.9667);">F</div>
<div class="r" style="left:341.00px;top:169.20px;width:1.00px;height:14.80px;background:#3c3c3c;"></div>
<div class="t" style="left:314.75px;top:168.83px;font-size:8.28px;color:#e6e6e6;font-weight:bold;transform:scaleX(0.9667);">G</div>
<div class="r" style="left:387.00px;top:169.20px;width:1.00px;height:14.80px;background:#3c3c3c;"></div>
<div class="t" style="left:361.40px;top:168.83px;font-size:8.28px;color:#e6e6e6;font-weight:bold;transform:scaleX(0.9667);">H</div>
<div class="r" style="left:433.00px;top:169.20px;width:1.00px;height:14.80px;background:#3c3c3c;"></div>
<div class="t" style="left:409.61px;top:168.83px;font-size:8.28px;color:#e6e6e6;font-weight:bold;transform:scaleX(0.9667);">I</div>
<div class="r" style="left:480.00px;top:169.20px;width:1.00px;height:14.80px;background:#3c3c3c;"></div>
<div class="t" style="left:454.93px;top:168.83px;font-size:8.28px;color:#e6e6e6;font-weight:bold;transform:scaleX(0.9667);">J</div>
<div class="r" style="left:526.00px;top:169.20px;width:1.00px;height:14.80px;background:#3c3c3c;"></div>
<div class="t" style="left:500.69px;top:168.83px;font-size:8.28px;color:#e6e6e6;font-weight:bold;transform:scaleX(0.9667);">K</div>
<div class="r" style="left:573.00px;top:169.20px;width:1.00px;height:14.80px;background:#3c3c3c;"></div>
<div class="t" style="left:547.57px;top:168.83px;font-size:8.28px;color:#e6e6e6;font-weight:bold;transform:scaleX(0.9667);">L</div>
<div class="r" style="left:619.00px;top:169.20px;width:1.00px;height:14.80px;background:#3c3c3c;"></div>
<div class="t" style="left:593.11px;top:168.83px;font-size:8.28px;color:#e6e6e6;font-weight:bold;transform:scaleX(0.9667);">M</div>
<div class="r" style="left:666.00px;top:169.20px;width:1.00px;height:14.80px;background:#3c3c3c;"></div>
<div class="t" style="left:639.98px;top:168.83px;font-size:8.28px;color:#e6e6e6;font-weight:bold;transform:scaleX(0.9667);">N</div>
<div class="r" style="left:712.00px;top:169.20px;width:1.00px;height:14.80px;background:#3c3c3c;"></div>
<div class="t" style="left:686.19px;top:168.83px;font-size:8.28px;color:#e6e6e6;font-weight:bold;transform:scaleX(0.9667);">O</div>
<div class="r" style="left:758.00px;top:169.20px;width:1.00px;height:14.80px;background:#3c3c3c;"></div>
<div class="t" style="left:733.06px;top:168.83px;font-size:8.28px;color:#e6e6e6;font-weight:bold;transform:scaleX(0.9667);">P</div>
<div class="r" style="left:805.00px;top:169.20px;width:1.00px;height:14.80px;background:#3c3c3c;"></div>
<div class="t" style="left:779.05px;top:168.83px;font-size:8.28px;color:#e6e6e6;font-weight:bold;transform:scaleX(0.9667);">Q</div>
<div class="r" style="left:851.00px;top:169.20px;width:1.00px;height:14.80px;background:#3c3c3c;"></div>
<div class="t" style="left:825.70px;top:168.83px;font-size:8.28px;color:#e6e6e6;font-weight:bold;transform:scaleX(0.9667);">R</div>
<div class="r" style="left:898.00px;top:169.20px;width:1.00px;height:14.80px;background:#3c3c3c;"></div>
<div class="t" style="left:872.35px;top:168.83px;font-size:8.28px;color:#e6e6e6;font-weight:bold;transform:scaleX(0.9667);">S</div>
<div class="r" style="left:944.00px;top:169.20px;width:1.00px;height:14.80px;background:#3c3c3c;"></div>
<div class="t" style="left:919.01px;top:168.83px;font-size:8.28px;color:#e6e6e6;font-weight:bold;transform:scaleX(0.9667);">T</div>
<div class="r" style="left:991.00px;top:169.20px;width:1.00px;height:14.80px;background:#3c3c3c;"></div>
<div class="t" style="left:964.99px;top:168.83px;font-size:8.28px;color:#e6e6e6;font-weight:bold;transform:scaleX(0.9667);">U</div>
<div class="r" style="left:1037.00px;top:169.20px;width:1.00px;height:14.80px;background:#3c3c3c;"></div>
<div class="t" style="left:1011.64px;top:168.83px;font-size:8.28px;color:#e6e6e6;font-weight:bold;transform:scaleX(0.9667);">V</div>
<div class="r" style="left:1083.00px;top:169.20px;width:1.00px;height:14.80px;background:#3c3c3c;"></div>
<div class="t" style="left:1056.97px;top:168.83px;font-size:8.28px;color:#e6e6e6;font-weight:bold;transform:scaleX(0.9667);">W</div>
<svg class="r" style="left:3px;top:172px" width="12" height="11" viewBox="0 0 12 11" fill="none"><path d="M11 0 V11 H0 Z" fill="#5a5a5a"/></svg>
<div class="r" style="left:15.50px;top:169.20px;width:1.00px;height:14.80px;background:#3c3c3c;"></div>
<div class="r" style="left:0.00px;top:184.00px;width:16.00px;height:482.00px;background:#161616;"></div>
<div class="r" style="left:0.00px;top:185.40px;width:16.00px;height:10.70px;background:#595959;"></div>
<div class="r" style="left:0.00px;top:196.00px;width:16.00px;height:1.00px;background:#3a3a3a;"></div>
<div class="t" style="left:5.37px;top:181.43px;font-size:8.43px;color:#f0f0f0;font-weight:bold;transform:scaleX(0.9500);">1</div>
<div class="r" style="left:0.00px;top:207.00px;width:16.00px;height:1.00px;background:#3a3a3a;"></div>
<div class="t" style="left:5.37px;top:192.86px;font-size:8.43px;color:#f0f0f0;font-weight:bold;transform:scaleX(0.9500);">2</div>
<div class="r" style="left:0.00px;top:219.00px;width:16.00px;height:1.00px;background:#3a3a3a;"></div>
<div class="t" style="left:5.37px;top:204.28px;font-size:8.43px;color:#f0f0f0;font-weight:bold;transform:scaleX(0.9500);">3</div>
<div class="r" style="left:0.00px;top:230.00px;width:16.00px;height:1.00px;background:#3a3a3a;"></div>
<div class="t" style="left:5.37px;top:215.71px;font-size:8.43px;color:#f0f0f0;font-weight:bold;transform:scaleX(0.9500);">4</div>
<div class="r" style="left:0.00px;top:242.00px;width:16.00px;height:1.00px;background:#3a3a3a;"></div>
<div class="t" style="left:5.37px;top:227.14px;font-size:8.43px;color:#f0f0f0;font-weight:bold;transform:scaleX(0.9500);">5</div>
<div class="r" style="left:0.00px;top:253.00px;width:16.00px;height:1.00px;background:#3a3a3a;"></div>
<div class="t" style="left:5.37px;top:238.57px;font-size:8.43px;color:#f0f0f0;font-weight:bold;transform:scaleX(0.9500);">6</div>
<div class="r" style="left:0.00px;top:265.00px;width:16.00px;height:1.00px;background:#3a3a3a;"></div>
<div class="t" style="left:5.37px;top:250.00px;font-size:8.43px;color:#f0f0f0;font-weight:bold;transform:scaleX(0.9500);">7</div>
<div class="r" style="left:0.00px;top:276.00px;width:16.00px;height:1.00px;background:#3a3a3a;"></div>
<div class="t" style="left:5.37px;top:261.42px;font-size:8.43px;color:#f0f0f0;font-weight:bold;transform:scaleX(0.9500);">8</div>
<div class="r" style="left:0.00px;top:287.00px;width:16.00px;height:1.00px;background:#3a3a3a;"></div>
<div class="t" style="left:5.37px;top:272.85px;font-size:8.43px;color:#f0f0f0;font-weight:bold;transform:scaleX(0.9500);">9</div>
<div class="r" style="left:0.00px;top:299.00px;width:16.00px;height:1.00px;background:#3a3a3a;"></div>
<div class="t" style="left:3.15px;top:284.28px;font-size:8.43px;color:#f0f0f0;font-weight:bold;transform:scaleX(0.9500);">10</div>
<div class="r" style="left:0.00px;top:310.00px;width:16.00px;height:1.00px;background:#3a3a3a;"></div>
<div class="t" style="left:3.37px;top:295.71px;font-size:8.43px;color:#f0f0f0;font-weight:bold;transform:scaleX(0.9500);">11</div>
<div class="r" style="left:0.00px;top:322.00px;width:16.00px;height:1.00px;background:#3a3a3a;"></div>
<div class="t" style="left:3.15px;top:307.14px;font-size:8.43px;color:#f0f0f0;font-weight:bold;transform:scaleX(0.9500);">12</div>
<div class="r" style="left:0.00px;top:333.00px;width:16.00px;height:1.00px;background:#3a3a3a;"></div>
<div class="t" style="left:3.15px;top:318.56px;font-size:8.43px;color:#f0f0f0;font-weight:bold;transform:scaleX(0.9500);">13</div>
<div class="r" style="left:0.00px;top:345.00px;width:16.00px;height:1.00px;background:#3a3a3a;"></div>
<div class="t" style="left:3.15px;top:329.99px;font-size:8.43px;color:#f0f0f0;font-weight:bold;transform:scaleX(0.9500);">14</div>
<div class="r" style="left:0.00px;top:356.00px;width:16.00px;height:1.00px;background:#3a3a3a;"></div>
<div class="t" style="left:3.15px;top:341.42px;font-size:8.43px;color:#f0f0f0;font-weight:bold;transform:scaleX(0.9500);">15</div>
<div class="r" style="left:0.00px;top:367.00px;width:16.00px;height:1.00px;background:#3a3a3a;"></div>
<div class="t" style="left:3.15px;top:352.85px;font-size:8.43px;color:#f0f0f0;font-weight:bold;transform:scaleX(0.9500);">16</div>
<div class="r" style="left:0.00px;top:379.00px;width:16.00px;height:1.00px;background:#3a3a3a;"></div>
<div class="t" style="left:3.15px;top:364.28px;font-size:8.43px;color:#f0f0f0;font-weight:bold;transform:scaleX(0.9500);">17</div>
<div class="r" style="left:0.00px;top:390.00px;width:16.00px;height:1.00px;background:#3a3a3a;"></div>
<div class="t" style="left:3.15px;top:375.70px;font-size:8.43px;color:#f0f0f0;font-weight:bold;transform:scaleX(0.9500);">18</div>
<div class="r" style="left:0.00px;top:402.00px;width:16.00px;height:1.00px;background:#3a3a3a;"></div>
<div class="t" style="left:3.15px;top:387.13px;font-size:8.43px;color:#f0f0f0;font-weight:bold;transform:scaleX(0.9500);">19</div>
<div class="r" style="left:0.00px;top:413.00px;width:16.00px;height:1.00px;background:#3a3a3a;"></div>
<div class="t" style="left:3.15px;top:398.56px;font-size:8.43px;color:#f0f0f0;font-weight:bold;transform:scaleX(0.9500);">20</div>
<div class="r" style="left:0.00px;top:425.00px;width:16.00px;height:1.00px;background:#3a3a3a;"></div>
<div class="t" style="left:3.15px;top:409.99px;font-size:8.43px;color:#f0f0f0;font-weight:bold;transform:scaleX(0.9500);">21</div>
<div class="r" style="left:0.00px;top:436.00px;width:16.00px;height:1.00px;background:#3a3a3a;"></div>
<div class="t" style="left:3.15px;top:421.42px;font-size:8.43px;color:#f0f0f0;font-weight:bold;transform:scaleX(0.9500);">22</div>
<div class="r" style="left:0.00px;top:447.00px;width:16.00px;height:1.00px;background:#3a3a3a;"></div>
<div class="t" style="left:3.15px;top:432.84px;font-size:8.43px;color:#f0f0f0;font-weight:bold;transform:scaleX(0.9500);">23</div>
<div class="r" style="left:0.00px;top:459.00px;width:16.00px;height:1.00px;background:#3a3a3a;"></div>
<div class="t" style="left:3.15px;top:444.27px;font-size:8.43px;color:#f0f0f0;font-weight:bold;transform:scaleX(0.9500);">24</div>
<div class="r" style="left:0.00px;top:470.00px;width:16.00px;height:1.00px;background:#3a3a3a;"></div>
<div class="t" style="left:3.15px;top:455.70px;font-size:8.43px;color:#f0f0f0;font-weight:bold;transform:scaleX(0.9500);">25</div>
<div class="r" style="left:0.00px;top:482.00px;width:16.00px;height:1.00px;background:#3a3a3a;"></div>
<div class="t" style="left:3.15px;top:467.13px;font-size:8.43px;color:#f0f0f0;font-weight:bold;transform:scaleX(0.9500);">26</div>
<div class="r" style="left:0.00px;top:493.00px;width:16.00px;height:1.00px;background:#3a3a3a;"></div>
<div class="t" style="left:3.15px;top:478.56px;font-size:8.43px;color:#f0f0f0;font-weight:bold;transform:scaleX(0.9500);">27</div>
<div class="r" style="left:0.00px;top:505.00px;width:16.00px;height:1.00px;background:#3a3a3a;"></div>
<div class="t" style="left:3.15px;top:489.98px;font-size:8.43px;color:#f0f0f0;font-weight:bold;transform:scaleX(0.9500);">28</div>
<div class="r" style="left:0.00px;top:516.00px;width:16.00px;height:1.00px;background:#3a3a3a;"></div>
<div class="t" style="left:3.15px;top:501.41px;font-size:8.43px;color:#f0f0f0;font-weight:bold;transform:scaleX(0.9500);">29</div>
<div class="r" style="left:0.00px;top:527.00px;width:16.00px;height:1.00px;background:#3a3a3a;"></div>
<div class="t" style="left:3.15px;top:512.84px;font-size:8.43px;color:#f0f0f0;font-weight:bold;transform:scaleX(0.9500);">30</div>
<div class="r" style="left:0.00px;top:539.00px;width:16.00px;height:1.00px;background:#3a3a3a;"></div>
<div class="t" style="left:3.15px;top:524.27px;font-size:8.43px;color:#f0f0f0;font-weight:bold;transform:scaleX(0.9500);">31</div>
<div class="r" style="left:0.00px;top:550.00px;width:16.00px;height:1.00px;background:#3a3a3a;"></div>
<div class="t" style="left:3.15px;top:535.70px;font-size:8.43px;color:#f0f0f0;font-weight:bold;transform:scaleX(0.9500);">32</div>
<div class="r" style="left:0.00px;top:562.00px;width:16.00px;height:1.00px;background:#3a3a3a;"></div>
<div class="t" style="left:3.15px;top:547.12px;font-size:8.43px;color:#f0f0f0;font-weight:bold;transform:scaleX(0.9500);">33</div>
<div class="r" style="left:0.00px;top:573.00px;width:16.00px;height:1.00px;background:#3a3a3a;"></div>
<div class="t" style="left:3.15px;top:558.55px;font-size:8.43px;color:#f0f0f0;font-weight:bold;transform:scaleX(0.9500);">34</div>
<div class="r" style="left:0.00px;top:585.00px;width:16.00px;height:1.00px;background:#3a3a3a;"></div>
<div class="t" style="left:3.15px;top:569.98px;font-size:8.43px;color:#f0f0f0;font-weight:bold;transform:scaleX(0.9500);">35</div>
<div class="r" style="left:0.00px;top:596.00px;width:16.00px;height:1.00px;background:#3a3a3a;"></div>
<div class="t" style="left:3.15px;top:581.41px;font-size:8.43px;color:#f0f0f0;font-weight:bold;transform:scaleX(0.9500);">36</div>
<div class="r" style="left:0.00px;top:607.00px;width:16.00px;height:1.00px;background:#3a3a3a;"></div>
<div class="t" style="left:3.15px;top:592.84px;font-size:8.43px;color:#f0f0f0;font-weight:bold;transform:scaleX(0.9500);">37</div>
<div class="r" style="left:0.00px;top:619.00px;width:16.00px;height:1.00px;background:#3a3a3a;"></div>
<div class="t" style="left:3.15px;top:604.26px;font-size:8.43px;color:#f0f0f0;font-weight:bold;transform:scaleX(0.9500);">38</div>
<div class="r" style="left:0.00px;top:630.00px;width:16.00px;height:1.00px;background:#3a3a3a;"></div>
<div class="t" style="left:3.15px;top:615.69px;font-size:8.43px;color:#f0f0f0;font-weight:bold;transform:scaleX(0.9500);">39</div>
<div class="r" style="left:0.00px;top:642.00px;width:16.00px;height:1.00px;background:#3a3a3a;"></div>
<div class="t" style="left:3.15px;top:627.12px;font-size:8.43px;color:#f0f0f0;font-weight:bold;transform:scaleX(0.9500);">40</div>
<div class="r" style="left:0.00px;top:653.00px;width:16.00px;height:1.00px;background:#3a3a3a;"></div>
<div class="t" style="left:3.15px;top:638.55px;font-size:8.43px;color:#f0f0f0;font-weight:bold;transform:scaleX(0.9500);">41</div>
<div class="t" style="left:3.15px;top:649.98px;font-size:8.43px;color:#f0f0f0;font-weight:bold;transform:scaleX(0.9500);">42</div>
<div class="c" style="left:17.87px;top:181.14px;width:44.13px"><span style="left:0;font-size:8.4px;color:#000;transform:scaleX(0.9)">Sr no.</span></div>
<div class="c" style="left:64.30px;top:181.14px;width:44.13px"><span style="left:0;font-size:8.4px;color:#000;transform:scaleX(0.9)">Stock Name</span></div>
<div class="c" style="left:110.73px;top:181.14px;width:44.13px"><span style="left:0;font-size:8.4px;color:#000;transform:scaleX(0.9)">Entry Price</span></div>
<div class="c" style="left:157.16px;top:181.14px;width:44.13px"><span style="left:0;font-size:8.4px;color:#000;transform:scaleX(0.9)">Exit Price</span></div>
<div class="c" style="left:203.59px;top:181.14px;width:44.13px"><span style="left:0;font-size:8.4px;color:#000;transform:scaleX(0.9)">Qty</span></div>
<div class="c" style="left:250.02px;top:181.14px;width:44.13px"><span style="left:0;font-size:8.4px;color:#000;transform:scaleX(0.9)">P&amp;L</span></div>
<div class="c" style="left:296.45px;top:181.14px;width:44.13px"><span style="left:0;font-size:8.4px;color:#000;transform:scaleX(0.9)">Entry Date</span></div>
<div class="c" style="left:342.88px;top:181.14px;width:44.13px"><span style="left:0;font-size:8.4px;color:#000;transform:scaleX(0.9)">Exit Date</span></div>
<div class="c" style="left:389.31px;top:181.14px;width:44.13px"><span style="left:0;font-size:8.4px;color:#000;transform:scaleX(0.9)">Exit Reason</span></div>
<div class="c" style="left:-43.93px;top:192.57px;width:105.83px"><span class="rt" style="right:1px;font-size:8.4px;color:#000;transform:scaleX(0.9)">1</span></div>
<div class="c" style="left:64.30px;top:192.57px;width:44.13px"><span style="left:0;font-size:8.4px;color:#000;transform:scaleX(0.9)">LTF</span></div>
<div class="c" style="left:48.93px;top:192.57px;width:105.83px"><span class="rt" style="right:1px;font-size:8.4px;color:#000;transform:scaleX(0.9)">309.15</span></div>
<div class="c" style="left:95.36px;top:192.57px;width:105.83px"><span class="rt" style="right:1px;font-size:8.4px;color:#000;transform:scaleX(0.9)">305.45</span></div>
<div class="c" style="left:141.79px;top:192.57px;width:105.83px"><span class="rt" style="right:1px;font-size:8.4px;color:#000;transform:scaleX(0.9)">107</span></div>
<div class="c" style="left:188.22px;top:192.57px;width:105.83px"><span class="rt" style="right:1px;font-size:8.4px;color:#000;transform:scaleX(0.9)">-395.9</span></div>
<div class="c" style="left:234.65px;top:192.57px;width:105.83px"><span class="rt" style="right:1px;font-size:8.4px;color:#000;transform:scaleX(0.9)">1-Dec-25</span></div>
<div class="c" style="left:281.08px;top:192.57px;width:105.83px"><span class="rt" style="right:1px;font-size:8.4px;color:#000;transform:scaleX(0.9)">30-Dec-25</span></div>
<div class="c" style="left:389.31px;top:192.57px;width:44.13px"><span style="left:0;font-size:8.4px;color:#000;transform:scaleX(0.9)">EOP</span></div>
<div class="c" style="left:-43.93px;top:204.00px;width:105.83px"><span class="rt" style="right:1px;font-size:8.4px;color:#000;transform:scaleX(0.9)">2</span></div>
<div class="c" style="left:64.30px;top:204.00px;width:44.13px"><span style="left:0;font-size:8.4px;color:#000;transform:scaleX(0.9)">MUTHOOTFIN</span></div>
<div class="c" style="left:48.93px;top:204.00px;width:105.83px"><span class="rt" style="right:1px;font-size:8.4px;color:#000;transform:scaleX(0.9)">3811.1</span></div>
<div class="c" style="left:95.36px;top:204.00px;width:105.83px"><span class="rt" style="right:1px;font-size:8.4px;color:#000;transform:scaleX(0.9)">3799.1</span></div>
<div class="c" style="left:141.79px;top:204.00px;width:105.83px"><span class="rt" style="right:1px;font-size:8.4px;color:#000;transform:scaleX(0.9)">8</span></div>
<div class="c" style="left:188.22px;top:204.00px;width:105.83px"><span class="rt" style="right:1px;font-size:8.4px;color:#000;transform:scaleX(0.9)">-96</span></div>
<div class="c" style="left:234.65px;top:204.00px;width:105.83px"><span class="rt" style="right:1px;font-size:8.4px;color:#000;transform:scaleX(0.9)">1-Dec-25</span></div>
<div class="c" style="left:281.08px;top:204.00px;width:105.83px"><span class="rt" style="right:1px;font-size:8.4px;color:#000;transform:scaleX(0.9)">30-Dec-25</span></div>
<div class="c" style="left:389.31px;top:204.00px;width:44.13px"><span style="left:0;font-size:8.4px;color:#000;transform:scaleX(0.9)">EOP</span></div>
<div class="c" style="left:-43.93px;top:215.42px;width:105.83px"><span class="rt" style="right:1px;font-size:8.4px;color:#000;transform:scaleX(0.9)">3</span></div>
<div class="c" style="left:64.30px;top:215.42px;width:44.13px"><span style="left:0;font-size:8.4px;color:#000;transform:scaleX(0.9)">INDIANB</span></div>
<div class="c" style="left:48.93px;top:215.42px;width:105.83px"><span class="rt" style="right:1px;font-size:8.4px;color:#000;transform:scaleX(0.9)">887.35</span></div>
<div class="c" style="left:95.36px;top:215.42px;width:105.83px"><span class="rt" style="right:1px;font-size:8.4px;color:#000;transform:scaleX(0.9)">809</span></div>
<div class="c" style="left:141.79px;top:215.42px;width:105.83px"><span class="rt" style="right:1px;font-size:8.4px;color:#000;transform:scaleX(0.9)">37</span></div>
<div class="c" style="left:188.22px;top:215.42px;width:105.83px"><span class="rt" style="right:1px;font-size:8.4px;color:#000;transform:scaleX(0.9)">-2898.95</span></div>
<div class="c" style="left:234.65px;top:215.42px;width:105.83px"><span class="rt" style="right:1px;font-size:8.4px;color:#000;transform:scaleX(0.9)">1-Dec-25</span></div>
<div class="c" style="left:281.08px;top:215.42px;width:105.83px"><span class="rt" style="right:1px;font-size:8.4px;color:#000;transform:scaleX(0.9)">30-Dec-25</span></div>
<div class="c" style="left:389.31px;top:215.42px;width:44.13px"><span style="left:0;font-size:8.4px;color:#000;transform:scaleX(0.9)">EOP</span></div>
<div class="c" style="left:-43.93px;top:226.85px;width:105.83px"><span class="rt" style="right:1px;font-size:8.4px;color:#000;transform:scaleX(0.9)">4</span></div>
<div class="c" style="left:64.30px;top:226.85px;width:44.13px"><span style="left:0;font-size:8.4px;color:#000;transform:scaleX(0.9)">HEROMOTOCO</span></div>
<div class="c" style="left:48.93px;top:226.85px;width:105.83px"><span class="rt" style="right:1px;font-size:8.4px;color:#000;transform:scaleX(0.9)">6295.5</span></div>
<div class="c" style="left:95.36px;top:226.85px;width:105.83px"><span class="rt" style="right:1px;font-size:8.4px;color:#000;transform:scaleX(0.9)">5711</span></div>
<div class="c" style="left:141.79px;top:226.85px;width:105.83px"><span class="rt" style="right:1px;font-size:8.4px;color:#000;transform:scaleX(0.9)">5</span></div>
<div class="c" style="left:188.22px;top:226.85px;width:105.83px"><span class="rt" style="right:1px;font-size:8.4px;color:#000;transform:scaleX(0.9)">-2922.5</span></div>
<div class="c" style="left:234.65px;top:226.85px;width:105.83px"><span class="rt" style="right:1px;font-size:8.4px;color:#000;transform:scaleX(0.9)">1-Dec-25</span></div>
<div class="c" style="left:281.08px;top:226.85px;width:105.83px"><span class="rt" style="right:1px;font-size:8.4px;color:#000;transform:scaleX(0.9)">30-Dec-25</span></div>
<div class="c" style="left:389.31px;top:226.85px;width:44.13px"><span style="left:0;font-size:8.4px;color:#000;transform:scaleX(0.9)">EOP</span></div>
<div class="c" style="left:-43.93px;top:238.28px;width:105.83px"><span class="rt" style="right:1px;font-size:8.4px;color:#000;transform:scaleX(0.9)">5</span></div>
<div class="c" style="left:64.30px;top:238.28px;width:44.13px"><span style="left:0;font-size:8.4px;color:#000;transform:scaleX(0.9)">LAURUSLABS</span></div>
<div class="c" style="left:48.93px;top:238.28px;width:105.83px"><span class="rt" style="right:1px;font-size:8.4px;color:#000;transform:scaleX(0.9)">1029.4</span></div>
<div class="c" style="left:95.36px;top:238.28px;width:105.83px"><span class="rt" style="right:1px;font-size:8.4px;color:#000;transform:scaleX(0.9)">1091.9</span></div>
<div class="c" style="left:141.79px;top:238.28px;width:105.83px"><span class="rt" style="right:1px;font-size:8.4px;color:#000;transform:scaleX(0.9)">32</span></div>
<div class="c" style="left:188.22px;top:238.28px;width:105.83px"><span class="rt" style="right:1px;font-size:8.4px;color:#000;transform:scaleX(0.9)">2000</span></div>
<div class="c" style="left:234.65px;top:238.28px;width:105.83px"><span class="rt" style="right:1px;font-size:8.4px;color:#000;transform:scaleX(0.9)">1-Dec-25</span></div>
<div class="c" style="left:281.08px;top:238.28px;width:105.83px"><span class="rt" style="right:1px;font-size:8.4px;color:#000;transform:scaleX(0.9)">30-Dec-25</span></div>
<div class="c" style="left:389.31px;top:238.28px;width:44.13px"><span style="left:0;font-size:8.4px;color:#000;transform:scaleX(0.9)">EOP</span></div>
<div class="c" style="left:-43.93px;top:249.71px;width:105.83px"><span class="rt" style="right:1px;font-size:8.4px;color:#000;transform:scaleX(0.9)">6</span></div>
<div class="c" style="left:64.30px;top:249.71px;width:44.13px"><span style="left:0;font-size:8.4px;color:#000;transform:scaleX(0.9)">EICHERMOT</span></div>
<div class="c" style="left:48.93px;top:249.71px;width:105.83px"><span class="rt" style="right:1px;font-size:8.4px;color:#000;transform:scaleX(0.9)">7125.5</span></div>
<div class="c" style="left:95.36px;top:249.71px;width:105.83px"><span class="rt" style="right:1px;font-size:8.4px;color:#000;transform:scaleX(0.9)">7192.5</span></div>
<div class="c" style="left:141.79px;top:249.71px;width:105.83px"><span class="rt" style="right:1px;font-size:8.4px;color:#000;transform:scaleX(0.9)">4</span></div>
<div class="c" style="left:188.22px;top:249.71px;width:105.83px"><span class="rt" style="right:1px;font-size:8.4px;color:#000;transform:scaleX(0.9)">268</span></div>
<div class="c" style="left:234.65px;top:249.71px;width:105.83px"><span class="rt" style="right:1px;font-size:8.4px;color:#000;transform:scaleX(0.9)">1-Dec-25</span></div>
<div class="c" style="left:281.08px;top:249.71px;width:105.83px"><span class="rt" style="right:1px;font-size:8.4px;color:#000;transform:scaleX(0.9)">30-Dec-25</span></div>
<div class="c" style="left:389.31px;top:249.71px;width:44.13px"><span style="left:0;font-size:8.4px;color:#000;transform:scaleX(0.9)">EOP</span></div>
<div class="c" style="left:-43.93px;top:261.14px;width:105.83px"><span class="rt" style="right:1px;font-size:8.4px;color:#000;transform:scaleX(0.9)">7</span></div>
<div class="c" style="left:64.30px;top:261.14px;width:44.13px"><span style="left:0;font-size:8.4px;color:#000;transform:scaleX(0.9)">ABCAPITAL</span></div>
<div class="c" style="left:48.93px;top:261.14px;width:105.83px"><span class="rt" style="right:1px;font-size:8.4px;color:#000;transform:scaleX(0.9)">356.1</span></div>
<div class="c" style="left:95.36px;top:261.14px;width:105.83px"><span class="rt" style="right:1px;font-size:8.4px;color:#000;transform:scaleX(0.9)">349.3</span></div>
<div class="c" style="left:141.79px;top:261.14px;width:105.83px"><span class="rt" style="right:1px;font-size:8.4px;color:#000;transform:scaleX(0.9)">93</span></div>
<div class="c" style="left:188.22px;top:261.14px;width:105.83px"><span class="rt" style="right:1px;font-size:8.4px;color:#000;transform:scaleX(0.9)">-632.4</span></div>
<div class="c" style="left:234.65px;top:261.14px;width:105.83px"><span class="rt" style="right:1px;font-size:8.4px;color:#000;transform:scaleX(0.9)">1-Dec-25</span></div>
<div class="c" style="left:281.08px;top:261.14px;width:105.83px"><span class="rt" style="right:1px;font-size:8.4px;color:#000;transform:scaleX(0.9)">30-Dec-25</span></div>
<div class="c" style="left:389.31px;top:261.14px;width:44.13px"><span style="left:0;font-size:8.4px;color:#000;transform:scaleX(0.9)">EOP</span></div>
<div class="c" style="left:-43.93px;top:272.56px;width:105.83px"><span class="rt" style="right:1px;font-size:8.4px;color:#000;transform:scaleX(0.9)">8</span></div>
<div class="c" style="left:64.30px;top:272.56px;width:44.13px"><span style="left:0;font-size:8.4px;color:#000;transform:scaleX(0.9)">CANBK</span></div>
<div class="c" style="left:48.93px;top:272.56px;width:105.83px"><span class="rt" style="right:1px;font-size:8.4px;color:#000;transform:scaleX(0.9)">150.5</span></div>
<div class="c" style="left:95.36px;top:272.56px;width:105.83px"><span class="rt" style="right:1px;font-size:8.4px;color:#000;transform:scaleX(0.9)">154.03</span></div>
<div class="c" style="left:141.79px;top:272.56px;width:105.83px"><span class="rt" style="right:1px;font-size:8.4px;color:#000;transform:scaleX(0.9)">221</span></div>
<div class="c" style="left:188.22px;top:272.56px;width:105.83px"><span class="rt" style="right:1px;font-size:8.4px;color:#000;transform:scaleX(0.9)">780.13</span></div>
<div class="c" style="left:234.65px;top:272.56px;width:105.83px"><span class="rt" style="right:1px;font-size:8.4px;color:#000;transform:scaleX(0.9)">1-Dec-25</span></div>
<div class="c" style="left:281.08px;top:272.56px;width:105.83px"><span class="rt" style="right:1px;font-size:8.4px;color:#000;transform:scaleX(0.9)">30-Dec-25</span></div>
<div class="c" style="left:389.31px;top:272.56px;width:44.13px"><span style="left:0;font-size:8.4px;color:#000;transform:scaleX(0.9)">EOP</span></div>
<div class="c" style="left:-43.93px;top:283.99px;width:105.83px"><span class="rt" style="right:1px;font-size:8.4px;color:#000;transform:scaleX(0.9)">9</span></div>
<div class="c" style="left:64.30px;top:283.99px;width:44.13px"><span style="left:0;font-size:8.4px;color:#000;transform:scaleX(0.9)">M&amp;MFIN</span></div>
<div class="c" style="left:48.93px;top:283.99px;width:105.83px"><span class="rt" style="right:1px;font-size:8.4px;color:#000;transform:scaleX(0.9)">367.9</span></div>
<div class="c" style="left:95.36px;top:283.99px;width:105.83px"><span class="rt" style="right:1px;font-size:8.4px;color:#000;transform:scaleX(0.9)">404.4</span></div>
<div class="c" style="left:141.79px;top:283.99px;width:105.83px"><span class="rt" style="right:1px;font-size:8.4px;color:#000;transform:scaleX(0.9)">90</span></div>
<div class="c" style="left:188.22px;top:283.99px;width:105.83px"><span class="rt" style="right:1px;font-size:8.4px;color:#000;transform:scaleX(0.9)">3285</span></div>
<div class="c" style="left:234.65px;top:283.99px;width:105.83px"><span class="rt" style="right:1px;font-size:8.4px;color:#000;transform:scaleX(0.9)">1-Dec-25</span></div>
<div class="c" style="left:281.08px;top:283.99px;width:105.83px"><span class="rt" style="right:1px;font-size:8.4px;color:#000;transform:scaleX(0.9)">30-Dec-25</span></div>
<div class="c" style="left:389.31px;top:283.99px;width:44.13px"><span style="left:0;font-size:8.4px;color:#000;transform:scaleX(0.9)">EOP</span></div>
<div class="c" style="left:-43.93px;top:295.42px;width:105.83px"><span class="rt" style="right:1px;font-size:8.4px;color:#000;transform:scaleX(0.9)">10</span></div>
<div class="c" style="left:64.30px;top:295.42px;width:44.13px"><span style="left:0;font-size:8.4px;color:#000;transform:scaleX(0.9)">CUMMINSIND</span></div>
<div class="c" style="left:48.93px;top:295.42px;width:105.83px"><span class="rt" style="right:1px;font-size:8.4px;color:#000;transform:scaleX(0.9)">4544.2</span></div>
<div class="c" style="left:95.36px;top:295.42px;width:105.83px"><span class="rt" style="right:1px;font-size:8.4px;color:#000;transform:scaleX(0.9)">4389.9</span></div>
<div class="c" style="left:141.79px;top:295.42px;width:105.83px"><span class="rt" style="right:1px;font-size:8.4px;color:#000;transform:scaleX(0.9)">7</span></div>
<div class="c" style="left:188.22px;top:295.42px;width:105.83px"><span class="rt" style="right:1px;font-size:8.4px;color:#000;transform:scaleX(0.9)">-1080.1</span></div>
<div class="c" style="left:234.65px;top:295.42px;width:105.83px"><span class="rt" style="right:1px;font-size:8.4px;color:#000;transform:scaleX(0.9)">1-Dec-25</span></div>
<div class="c" style="left:281.08px;top:295.42px;width:105.83px"><span class="rt" style="right:1px;font-size:8.4px;color:#000;transform:scaleX(0.9)">30-Dec-25</span></div>
<div class="c" style="left:389.31px;top:295.42px;width:44.13px"><span style="left:0;font-size:8.4px;color:#000;transform:scaleX(0.9)">EOP</span></div>
<div class="c" style="left:-43.93px;top:306.85px;width:105.83px"><span class="rt" style="right:1px;font-size:8.4px;color:#000;transform:scaleX(0.9)">11</span></div>
<div class="c" style="left:64.30px;top:306.85px;width:44.13px"><span style="left:0;font-size:8.4px;color:#000;transform:scaleX(0.9)">SBIN</span></div>
<div class="c" style="left:48.93px;top:306.85px;width:105.83px"><span class="rt" style="right:1px;font-size:8.4px;color:#000;transform:scaleX(0.9)">973.1</span></div>
<div class="c" style="left:95.36px;top:306.85px;width:105.83px"><span class="rt" style="right:1px;font-size:8.4px;color:#000;transform:scaleX(0.9)">973.45</span></div>
<div class="c" style="left:141.79px;top:306.85px;width:105.83px"><span class="rt" style="right:1px;font-size:8.4px;color:#000;transform:scaleX(0.9)">34</span></div>
<div class="c" style="left:188.22px;top:306.85px;width:105.83px"><span class="rt" style="right:1px;font-size:8.4px;color:#000;transform:scaleX(0.9)">11.9</span></div>
<div class="c" style="left:234.65px;top:306.85px;width:105.83px"><span class="rt" style="right:1px;font-size:8.4px;color:#000;transform:scaleX(0.9)">1-Dec-25</span></div>
<div class="c" style="left:281.08px;top:306.85px;width:105.83px"><span class="rt" style="right:1px;font-size:8.4px;color:#000;transform:scaleX(0.9)">30-Dec-25</span></div>
<div class="c" style="left:389.31px;top:306.85px;width:44.13px"><span style="left:0;font-size:8.4px;color:#000;transform:scaleX(0.9)">EOP</span></div>
<div class="c" style="left:-43.93px;top:318.28px;width:105.83px"><span class="rt" style="right:1px;font-size:8.4px;color:#000;transform:scaleX(0.9)">12</span></div>
<div class="c" style="left:64.30px;top:318.28px;width:44.13px"><span style="left:0;font-size:8.4px;color:#000;transform:scaleX(0.9)">PAYTM</span></div>
<div class="c" style="left:48.93px;top:318.28px;width:105.83px"><span class="rt" style="right:1px;font-size:8.4px;color:#000;transform:scaleX(0.9)">1367.8</span></div>
<div class="c" style="left:95.36px;top:318.28px;width:105.83px"><span class="rt" style="right:1px;font-size:8.4px;color:#000;transform:scaleX(0.9)">1294.6</span></div>
<div class="c" style="left:141.79px;top:318.28px;width:105.83px"><span class="rt" style="right:1px;font-size:8.4px;color:#000;transform:scaleX(0.9)">24</span></div>
<div class="c" style="left:188.22px;top:318.28px;width:105.83px"><span class="rt" style="right:1px;font-size:8.4px;color:#000;transform:scaleX(0.9)">-1756.8</span></div>
<div class="c" style="left:234.65px;top:318.28px;width:105.83px"><span class="rt" style="right:1px;font-size:8.4px;color:#000;transform:scaleX(0.9)">1-Dec-25</span></div>
<div class="c" style="left:281.08px;top:318.28px;width:105.83px"><span class="rt" style="right:1px;font-size:8.4px;color:#000;transform:scaleX(0.9)">30-Dec-25</span></div>
<div class="c" style="left:389.31px;top:318.28px;width:44.13px"><span style="left:0;font-size:8.4px;color:#000;transform:scaleX(0.9)">EOP</span></div>
<div class="c" style="left:-43.93px;top:329.70px;width:105.83px"><span class="rt" style="right:1px;font-size:8.4px;color:#000;transform:scaleX(0.9)">13</span></div>
<div class="c" style="left:64.30px;top:329.70px;width:44.13px"><span style="left:0;font-size:8.4px;color:#000;transform:scaleX(0.9)">ASHOKLEY</span></div>
<div class="c" style="left:48.93px;top:329.70px;width:105.83px"><span class="rt" style="right:1px;font-size:8.4px;color:#000;transform:scaleX(0.9)">160.3</span></div>
<div class="c" style="left:95.36px;top:329.70px;width:105.83px"><span class="rt" style="right:1px;font-size:8.4px;color:#000;transform:scaleX(0.9)">178.63</span></div>
<div class="c" style="left:141.79px;top:329.70px;width:105.83px"><span class="rt" style="right:1px;font-size:8.4px;color:#000;transform:scaleX(0.9)">207</span></div>
<div class="c" style="left:188.22px;top:329.70px;width:105.83px"><span class="rt" style="right:1px;font-size:8.4px;color:#000;transform:scaleX(0.9)">3794.31</span></div>
<div class="c" style="left:234.65px;top:329.70px;width:105.83px"><span class="rt" style="right:1px;font-size:8.4px;color:#000;transform:scaleX(0.9)">1-Dec-25</span></div>
<div class="c" style="left:281.08px;top:329.70px;width:105.83px"><span class="rt" style="right:1px;font-size:8.4px;color:#000;transform:scaleX(0.9)">30-Dec-25</span></div>
<div class="c" style="left:389.31px;top:329.70px;width:44.13px"><span style="left:0;font-size:8.4px;color:#000;transform:scaleX(0.9)">EOP</span></div>
<div class="c" style="left:-43.93px;top:341.13px;width:105.83px"><span class="rt" style="right:1px;font-size:8.4px;color:#000;transform:scaleX(0.9)">14</span></div>
<div class="c" style="left:64.30px;top:341.13px;width:44.13px"><span style="left:0;font-size:8.4px;color:#000;transform:scaleX(0.9)">AUBANK</span></div>
<div class="c" style="left:48.93px;top:341.13px;width:105.83px"><span class="rt" style="right:1px;font-size:8.4px;color:#000;transform:scaleX(0.9)">950.5</span></div>
<div class="c" style="left:95.36px;top:341.13px;width:105.83px"><span class="rt" style="right:1px;font-size:8.4px;color:#000;transform:scaleX(0.9)">996.45</span></div>
<div class="c" style="left:141.79px;top:341.13px;width:105.83px"><span class="rt" style="right:1px;font-size:8.4px;color:#000;transform:scaleX(0.9)">35</span></div>
<div class="c" style="left:188.22px;top:341.13px;width:105.83px"><span class="rt" style="right:1px;font-size:8.4px;color:#000;transform:scaleX(0.9)">1608.25</span></div>
<div class="c" style="left:234.65px;top:341.13px;width:105.83px"><span class="rt" style="right:1px;font-size:8.4px;color:#000;transform:scaleX(0.9)">1-Dec-25</span></div>
<div class="c" style="left:281.08px;top:341.13px;width:105.83px"><span class="rt" style="right:1px;font-size:8.4px;color:#000;transform:scaleX(0.9)">30-Dec-25</span></div>
<div class="c" style="left:389.31px;top:341.13px;width:44.13px"><span style="left:0;font-size:8.4px;color:#000;transform:scaleX(0.9)">EOP</span></div>
<div class="c" style="left:-43.93px;top:352.56px;width:105.83px"><span class="rt" style="right:1px;font-size:8.4px;color:#000;transform:scaleX(0.9)">15</span></div>
<div class="c" style="left:64.30px;top:352.56px;width:44.13px"><span style="left:0;font-size:8.4px;color:#000;transform:scaleX(0.9)">CUB</span></div>
<div class="c" style="left:48.93px;top:352.56px;width:105.83px"><span class="rt" style="right:1px;font-size:8.4px;color:#000;transform:scaleX(0.9)">282.95</span></div>
<div class="c" style="left:95.36px;top:352.56px;width:105.83px"><span class="rt" style="right:1px;font-size:8.4px;color:#000;transform:scaleX(0.9)">297.4</span></div>
<div class="c" style="left:141.79px;top:352.56px;width:105.83px"><span class="rt" style="right:1px;font-size:8.4px;color:#000;transform:scaleX(0.9)">117</span></div>
<div class="c" style="left:188.22px;top:352.56px;width:105.83px"><span class="rt" style="right:1px;font-size:8.4px;color:#000;transform:scaleX(0.9)">1690.65</span></div>
<div class="c" style="left:234.65px;top:352.56px;width:105.83px"><span class="rt" style="right:1px;font-size:8.4px;color:#000;transform:scaleX(0.9)">1-Dec-25</span></div>
<div class="c" style="left:281.08px;top:352.56px;width:105.83px"><span class="rt" style="right:1px;font-size:8.4px;color:#000;transform:scaleX(0.9)">30-Dec-25</span></div>
<div class="c" style="left:389.31px;top:352.56px;width:44.13px"><span style="left:0;font-size:8.4px;color:#000;transform:scaleX(0.9)">EOP</span></div>
<div class="c" style="left:17.87px;top:386.84px;width:44.13px"><span style="left:0;font-size:8.4px;color:#000;transform:scaleX(0.9)">Sr no.</span></div>
<div class="c" style="left:64.30px;top:386.84px;width:44.13px"><span style="left:0;font-size:8.4px;color:#000;transform:scaleX(0.9)">Date</span></div>
<div class="c" style="left:110.73px;top:386.84px;width:44.13px"><span style="left:0;font-size:8.4px;color:#000;transform:scaleX(0.9)">Unrealised PL</span></div>
<div class="c" style="left:157.16px;top:386.84px;width:44.13px"><span style="left:0;font-size:8.4px;color:#000;transform:scaleX(0.9)">Realised PL</span></div>
<div class="c" style="left:203.59px;top:386.84px;width:44.13px"><span style="left:0;font-size:8.4px;color:#000;transform:scaleX(0.9)">Total PL</span></div>
<div class="c" style="left:-43.93px;top:398.27px;width:105.83px"><span class="rt" style="right:1px;font-size:8.4px;color:#000;transform:scaleX(0.9)">0</span></div>
<div class="c" style="left:2.50px;top:398.27px;width:105.83px"><span class="rt" style="right:1px;font-size:8.4px;color:#000;transform:scaleX(0.9)">1-Dec-25</span></div>
<div class="c" style="left:48.93px;top:398.27px;width:105.83px"><span class="rt" style="right:1px;font-size:8.4px;color:#000;transform:scaleX(0.9)">0</span></div>
<div class="c" style="left:95.36px;top:398.27px;width:105.83px"><span class="rt" style="right:1px;font-size:8.4px;color:#000;transform:scaleX(0.9)">0</span></div>
<div class="c" style="left:141.79px;top:398.27px;width:105.83px"><span class="rt" style="right:1px;font-size:8.4px;color:#000;transform:scaleX(0.9)">0</span></div>
<div class="c" style="left:-43.93px;top:409.70px;width:105.83px"><span class="rt" style="right:1px;font-size:8.4px;color:#000;transform:scaleX(0.9)">1</span></div>
<div class="c" style="left:64.30px;top:409.70px;width:44.13px"><span style="left:0;font-size:8.4px;color:#000;transform:scaleX(0.9)">30 December 2025</span></div>
<div class="c" style="left:48.93px;top:409.70px;width:105.83px"><span class="rt" style="right:1px;font-size:8.4px;color:#000;transform:scaleX(0.9)">0</span></div>
<div class="c" style="left:95.36px;top:409.70px;width:105.83px"><span class="rt" style="right:1px;font-size:8.4px;color:#000;transform:scaleX(0.9)">3655.59</span></div>
<div class="c" style="left:141.79px;top:409.70px;width:105.83px"><span class="rt" style="right:1px;font-size:8.4px;color:#000;transform:scaleX(0.9)">3655.59</span></div>
<div class="r" style="left:62.00px;top:437.00px;width:1.00px;height:10.00px;background:#ffffff;"></div>
<div class="r" style="left:62.00px;top:483.00px;width:1.00px;height:10.00px;background:#ffffff;"></div>
<div class="c" style="left:17.87px;top:432.56px;width:136.99px"><span style="left:0;font-size:8.4px;color:#000;transform:scaleX(0.9)">Total P&amp;L Perfomance</span></div>
<div class="c" style="left:17.87px;top:478.27px;width:136.99px"><span style="left:0;font-size:8.4px;color:#000;transform:scaleX(0.9)">Realised P&amp;L Perfomance</span></div>
<div class="c" style="left:17.87px;top:443.98px;width:44.13px"><span style="left:0;font-size:8.4px;color:#000;transform:scaleX(0.9)">Year</span></div>
<div class="c" style="left:64.30px;top:443.98px;width:44.13px"><span style="left:0;font-size:8.4px;color:#000;transform:scaleX(0.9)">Jan</span></div>
<div class="c" style="left:110.73px;top:443.98px;width:44.13px"><span style="left:0;font-size:8.4px;color:#000;transform:scaleX(0.9)">Feb</span></div>
<div class="c" style="left:157.16px;top:443.98px;width:44.13px"><span style="left:0;font-size:8.4px;color:#000;transform:scaleX(0.9)">Mar</span></div>
<div class="c" style="left:203.59px;top:443.98px;width:44.13px"><span style="left:0;font-size:8.4px;color:#000;transform:scaleX(0.9)">Apr</span></div>
<div class="c" style="left:250.02px;top:443.98px;width:44.13px"><span style="left:0;font-size:8.4px;color:#000;transform:scaleX(0.9)">May</span></div>
<div class="c" style="left:296.45px;top:443.98px;width:44.13px"><span style="left:0;font-size:8.4px;color:#000;transform:scaleX(0.9)">Jun</span></div>
<div class="c" style="left:342.88px;top:443.98px;width:44.13px"><span style="left:0;font-size:8.4px;color:#000;transform:scaleX(0.9)">Jul</span></div>
<div class="c" style="left:389.31px;top:443.98px;width:44.13px"><span style="left:0;font-size:8.4px;color:#000;transform:scaleX(0.9)">Aug</span></div>
<div class="c" style="left:435.74px;top:443.98px;width:44.13px"><span style="left:0;font-size:8.4px;color:#000;transform:scaleX(0.9)">Sep</span></div>
<div class="c" style="left:482.17px;top:443.98px;width:44.13px"><span style="left:0;font-size:8.4px;color:#000;transform:scaleX(0.9)">Oct</span></div>
<div class="c" style="left:528.60px;top:443.98px;width:44.13px"><span style="left:0;font-size:8.4px;color:#000;transform:scaleX(0.9)">Nov</span></div>
<div class="c" style="left:575.03px;top:443.98px;width:44.13px"><span style="left:0;font-size:8.4px;color:#000;transform:scaleX(0.9)">Dec</span></div>
<div class="c" style="left:621.46px;top:443.98px;width:44.13px"><span style="left:0;font-size:8.4px;color:#000;transform:scaleX(0.9)">Total</span></div>
<div class="c" style="left:17.87px;top:489.70px;width:44.13px"><span style="left:0;font-size:8.4px;color:#000;transform:scaleX(0.9)">Year</span></div>
<div class="c" style="left:64.30px;top:489.70px;width:44.13px"><span style="left:0;font-size:8.4px;color:#000;transform:scaleX(0.9)">Jan</span></div>
<div class="c" style="left:110.73px;top:489.70px;width:44.13px"><span style="left:0;font-size:8.4px;color:#000;transform:scaleX(0.9)">Feb</span></div>
<div class="c" style="left:157.16px;top:489.70px;width:44.13px"><span style="left:0;font-size:8.4px;color:#000;transform:scaleX(0.9)">Mar</span></div>
<div class="c" style="left:203.59px;top:489.70px;width:44.13px"><span style="left:0;font-size:8.4px;color:#000;transform:scaleX(0.9)">Apr</span></div>
<div class="c" style="left:250.02px;top:489.70px;width:44.13px"><span style="left:0;font-size:8.4px;color:#000;transform:scaleX(0.9)">May</span></div>
<div class="c" style="left:296.45px;top:489.70px;width:44.13px"><span style="left:0;font-size:8.4px;color:#000;transform:scaleX(0.9)">Jun</span></div>
<div class="c" style="left:342.88px;top:489.70px;width:44.13px"><span style="left:0;font-size:8.4px;color:#000;transform:scaleX(0.9)">Jul</span></div>
<div class="c" style="left:389.31px;top:489.70px;width:44.13px"><span style="left:0;font-size:8.4px;color:#000;transform:scaleX(0.9)">Aug</span></div>
<div class="c" style="left:435.74px;top:489.70px;width:44.13px"><span style="left:0;font-size:8.4px;color:#000;transform:scaleX(0.9)">Sep</span></div>
<div class="c" style="left:482.17px;top:489.70px;width:44.13px"><span style="left:0;font-size:8.4px;color:#000;transform:scaleX(0.9)">Oct</span></div>
<div class="c" style="left:528.60px;top:489.70px;width:44.13px"><span style="left:0;font-size:8.4px;color:#000;transform:scaleX(0.9)">Nov</span></div>
<div class="c" style="left:575.03px;top:489.70px;width:44.13px"><span style="left:0;font-size:8.4px;color:#000;transform:scaleX(0.9)">Dec</span></div>
<div class="c" style="left:621.46px;top:489.70px;width:44.13px"><span style="left:0;font-size:8.4px;color:#000;transform:scaleX(0.9)">Total</span></div>
<div class="c" style="left:-43.93px;top:455.41px;width:105.83px"><span class="rt" style="right:1px;font-size:8.4px;color:#000;transform:scaleX(0.9)">2025</span></div>
<div class="c" style="left:513.23px;top:455.41px;width:105.83px"><span class="rt" style="right:1px;font-size:8.4px;color:#000;transform:scaleX(0.9)">0.00%</span></div>
<div class="c" style="left:559.66px;top:455.41px;width:105.83px"><span class="rt" style="right:1px;font-size:8.4px;color:#000;transform:scaleX(0.9)">0.73%</span></div>
<div class="c" style="left:-43.93px;top:501.12px;width:105.83px"><span class="rt" style="right:1px;font-size:8.4px;color:#000;transform:scaleX(0.9)">2025</span></div>
<div class="c" style="left:513.23px;top:501.12px;width:105.83px"><span class="rt" style="right:1px;font-size:8.4px;color:#000;transform:scaleX(0.9)">0.00%</span></div>
<div class="c" style="left:559.66px;top:501.12px;width:105.83px"><span class="rt" style="right:1px;font-size:8.4px;color:#000;transform:scaleX(0.9)">0.73%</span></div>
<div class="r" style="left:15.2px;top:184.1px;width:48px;height:12.7px;border:1.4px solid #23765a;box-sizing:border-box"></div>
<div class="r" style="left:60.30px;top:195.20px;width:3.90px;height:2.90px;background:#23765a;"></div>
<div class="r" style="left:18.70px;top:659.10px;width:1044.30px;height:5.90px;background:#cbcbcb;border-radius:3px"></div>
<svg class="r" style="left:9px;top:670px" width="8" height="10" viewBox="0 0 8 10" fill="none"><path d="M6.5 1 L1.5 5 L6.5 9 Z" fill="#5d5d5d"/></svg>
<svg class="r" style="left:26px;top:670px" width="8" height="10" viewBox="0 0 8 10" fill="none"><path d="M1.5 1 L6.5 5 L1.5 9 Z" fill="#5d5d5d"/></svg>
<div class="r" style="left:43.50px;top:665.50px;width:80.20px;height:16.40px;background:#ffffff;border-radius:0 0 2px 2px"></div>
<div class="t" style="left:56.00px;top:666.38px;font-size:9.30px;color:#1f6c4d;font-weight:bold;transform:scaleX(0.8966);">ExitTrades (2)</div>
<svg class="r" style="left:133px;top:670px" width="10" height="10" viewBox="0 0 10 10" fill="none"><path d="M5 1 V9 M1 5 H9" stroke="#d0d0d0" stroke-width="1.1"/></svg>
<div class="r" style="left:151.00px;top:667.50px;width:1.00px;height:12.50px;background:#4a4a4a;"></div>
<div class="t" style="left:17.60px;top:684.13px;font-size:9.16px;color:#d6d6d6;transform:scaleX(0.9294);-webkit-text-stroke:0.45px #d6d6d6;">Ready</div>
<svg class="r" style="left:55px;top:686px" width="14" height="14" viewBox="55 686 14 14" fill="none"><ellipse cx="60.8" cy="689.4" rx="1.9" ry="1.3" stroke="#d8d8d8" stroke-width="0.9"/><path d="M56.6 690.2 Q58.3 691.6 60.8 691 Q63.3 691.6 65.2 690.2 M59.3 691.3 L58.7 694.5 L57.8 697.8 M60.6 694.5 L61.5 697.8" stroke="#d8d8d8" stroke-width="0.9" stroke-linecap="round"/><path d="M63.6 693.6 C63.6 691.9 66.9 691.9 66.6 694 C66.4 695.1 65.2 695.2 65.2 696.6" stroke="#d8d8d8" stroke-width="0.9" stroke-linecap="round"/><circle cx="65.2" cy="698" r="0.5" fill="#d8d8d8"/></svg>
<div class="t" style="left:71.00px;top:684.13px;font-size:9.16px;color:#d6d6d6;transform:scaleX(0.9824);-webkit-text-stroke:0.45px #d6d6d6;">Accessibility: Unavailable</div>
<div class="r" style="left:852.50px;top:685.50px;width:25.80px;height:15.50px;background:#454545;"></div>
<svg class="r" style="left:859px;top:686px" width="13" height="13" viewBox="859 686 13 13" fill="none"><path d="M860.8 687.7 H869.8 V697.2 H860.8 Z M860.8 690.1 H869.8 M860.8 692.5 H869.8 M860.8 694.9 H869.8 M863.1 687.7 V697.2 M865.3 687.7 V697.2 M867.5 687.7 V697.2" stroke="#e2e2e2" stroke-width="0.9"/></svg>
<svg class="r" style="left:885px;top:686px" width="13" height="13" viewBox="885 686 13 13" fill="none"><rect x="886.7" y="687.9" width="9.2" height="9.2" rx="0.8" stroke="#cfcfcf" stroke-width="0.9"/><path d="M889.3 689.8 V695.2 M893.3 689.8 V695.2 M889.3 689.8 H893.3 M889.3 695.2 H893.3" stroke="#cfcfcf" stroke-width="0.9"/></svg>
<svg class="r" style="left:910px;top:686px" width="13" height="13" viewBox="910 686 13 13" fill="none"><path d="M911.2 689.5 V697.2 H921.7 V687.9 H916.5 V693 H913 V689.5 H911.2 M913 687.9 V689.5" stroke="#cfcfcf" stroke-width="0.9"/></svg>
<div class="r" style="left:935.00px;top:691.80px;width:5.80px;height:1.50px;background:#e6e6e6;"></div>
<div class="r" style="left:945.70px;top:692.20px;width:70.90px;height:1.80px;background:#6a6a6a;border-radius:1px"></div>
<div class="r" style="left:974.70px;top:688.00px;width:13.30px;height:10.00px;background:#e2e2e2;border-radius:50%"></div>
<svg class="r" style="left:1021px;top:688px" width="9" height="9" viewBox="1021 688 9 9" fill="none"><path d="M1025 689.5 V695.5 M1022 692.5 H1028" stroke="#e6e6e6" stroke-width="1.5"/></svg>
<div class="t" style="left:1039.80px;top:684.28px;font-size:9.30px;color:#dedede;transform:scaleX(0.9499);-webkit-text-stroke:0.15px #dedede;">100%</div>
</body></html>
